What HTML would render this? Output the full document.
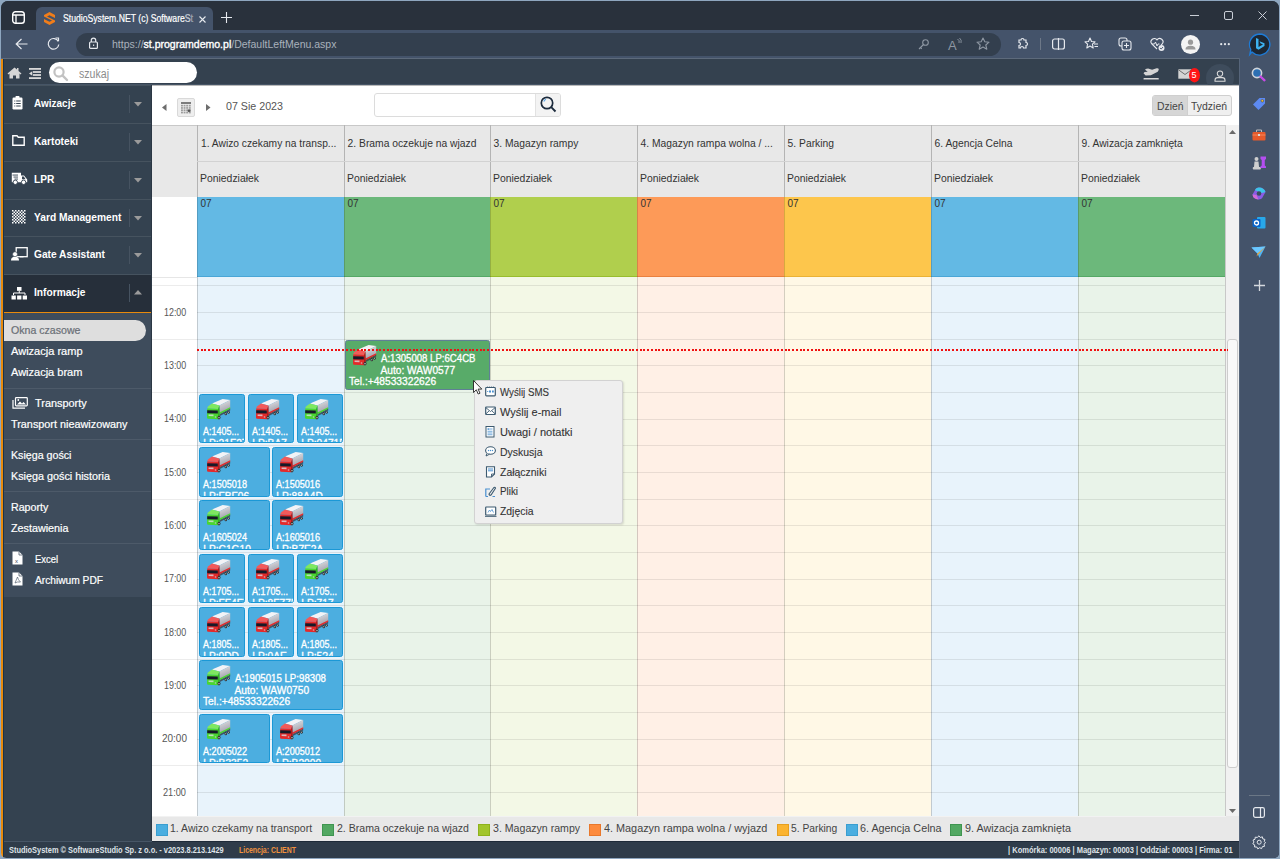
<!DOCTYPE html><html><head><meta charset="utf-8"><title>StudioSystem</title><style>
*{margin:0;padding:0;box-sizing:border-box}
html,body{width:1280px;height:859px;overflow:hidden;background:#8ea6bf;font-family:"Liberation Sans", sans-serif}
.abs{position:absolute}
.t{position:absolute;white-space:nowrap;line-height:1}
svg{position:absolute;overflow:visible}
</style></head><body>
<div class="abs" style="left:1px;top:1px;width:1278px;height:857px;border-radius:7px 7px 5px 5px;overflow:hidden;background:#29313c">
<div class="abs" style="left:0px;top:0px;width:1278px;height:29px;background:#29313c"></div>
<div class="abs" style="left:35px;top:6px;width:177px;height:23px;background:#44536a;border-radius:6px 6px 0 0"></div>
<svg style="left:11px;top:10px;" width="13" height="13" viewBox="0 0 13 13"><rect x="0.7" y="0.7" width="11.6" height="11.6" rx="2.8" fill="none" stroke="#fff" stroke-width="1.4"/><line x1="0.7" y1="4" x2="12.3" y2="4" stroke="#fff" stroke-width="1.3"/><line x1="4" y1="4" x2="4" y2="12.3" stroke="#fff" stroke-width="1.3"/></svg>
<svg style="left:43px;top:11px;" width="11" height="13" viewBox="0 0 11 13"><path d="M5.5 0 L11 3 L11 6 L5.5 3.2 L3 4.6 L11 8.5 L11 10 L5.5 13 L0 10 L0 7 L5.5 9.8 L8 8.4 L0 4.5 L0 3 Z" fill="#f07d1a"/></svg>
<div class="t" style="left:62px;top:13.33px;font-size:10px;transform:scaleX(0.8643);transform-origin:0 0;color:#ffffff;-webkit-text-stroke:0.2px #fff">StudioSystem.NET (c) Software<span style="color:#aeb7c3">S</span><span style="color:#6f7c8d">t</span></div>
<svg style="left:198px;top:15px;" width="7" height="7" viewBox="0 0 7 7"><path d="M0.5 0.5 L6.5 6.5 M6.5 0.5 L0.5 6.5" stroke="#e6e9ee" stroke-width="1.1"/></svg>
<svg style="left:220px;top:11px;" width="11" height="11" viewBox="0 0 11 11"><path d="M5.5 0 V11 M0 5.5 H11" stroke="#e6e9ee" stroke-width="1.1"/></svg>
<svg style="left:1189px;top:14px;" width="9" height="1" viewBox="0 0 9 1"><rect width="9" height="1" fill="#c9ced6"/></svg>
<svg style="left:1223px;top:10px;" width="9" height="9" viewBox="0 0 9 9"><rect x="0.5" y="0.5" width="8" height="8" rx="1.5" fill="none" stroke="#c9ced6" stroke-width="1"/></svg>
<svg style="left:1257px;top:10px;" width="9" height="9" viewBox="0 0 9 9"><path d="M0.5 0.5 L8.5 8.5 M8.5 0.5 L0.5 8.5" stroke="#c9ced6" stroke-width="1"/></svg>
<div class="abs" style="left:0px;top:29px;width:1278px;height:28px;background:#44536a"></div>
<div class="abs" style="left:0px;top:57px;width:1278px;height:1px;background:#44536a"></div>
<div class="abs" style="left:75px;top:32px;width:925px;height:23px;background:#333f4e;border-radius:12px"></div>
<svg style="left:14px;top:37px;" width="13" height="12" viewBox="0 0 13 12"><path d="M12.5 6 H1.5 M6.5 1 L1.2 6 L6.5 11" fill="none" stroke="#e6e9ee" stroke-width="1.2"/></svg>
<svg style="left:46px;top:36px;" width="13" height="13" viewBox="0 0 13 13"><path d="M11.3 4.5 A5.3 5.3 0 1 0 11.8 7.5" fill="none" stroke="#e6e9ee" stroke-width="1.2"/><path d="M8.5 1 L11.5 1 L11.5 4" fill="none" stroke="#e6e9ee" stroke-width="1.2"/></svg>
<svg style="left:88px;top:36px;" width="9" height="12" viewBox="0 0 9 12"><rect x="0.6" y="5" width="7.8" height="6.4" rx="1" fill="none" stroke="#e6e9ee" stroke-width="1.2"/><path d="M2.3 5 V3.3 A2.2 2.2 0 0 1 6.7 3.3 V5" fill="none" stroke="#e6e9ee" stroke-width="1.2"/><rect x="4" y="7.5" width="1.2" height="1.4" fill="#e6e9ee"/></svg>
<div class="t" style="left:110.5px;top:39.38px;font-size:10.3px;transform:scaleX(1.0212);transform-origin:0 0;"><span style="color:#a9b1bc">https://</span><span style="color:#ffffff;-webkit-text-stroke:0.35px #fff">st.programdemo.pl</span><span style="color:#a9b1bc">/DefaultLeftMenu.aspx</span></div>
<svg style="left:917px;top:38px;" width="11" height="11" viewBox="0 0 11 11"><circle cx="7.5" cy="3.5" r="2.8" fill="none" stroke="#8e97a3" stroke-width="1.1"/><path d="M5.5 5.5 L1 10 M2.5 8.5 L3.8 9.8" fill="none" stroke="#8e97a3" stroke-width="1.1"/></svg>
<div class="t" style="left:947px;top:38px;font-size:13px;color:#8e97a3">A</div>
<svg style="left:956px;top:37px;" width="5" height="6" viewBox="0 0 5 6"><path d="M0.5 1 Q3 2.5 2 5 M2.5 0 Q5 2 4 5" fill="none" stroke="#8e97a3" stroke-width="0.9"/></svg>
<svg style="left:975px;top:36px;" width="14" height="13" viewBox="0 0 14 13"><path d="M7 1 L8.8 4.8 L13 5.2 L9.8 8 L10.8 12.2 L7 10 L3.2 12.2 L4.2 8 L1 5.2 L5.2 4.8 Z" fill="none" stroke="#8e97a3" stroke-width="1.1" stroke-linejoin="round"/></svg>
<svg style="left:1015px;top:36px;" width="13" height="13" viewBox="0 0 13 13"><path d="M3 3 H5 A1.5 1.5 0 0 1 8 3 H10 V5.5 A1.5 1.5 0 0 1 10 8.5 V11 H7.5 A1.5 1.5 0 0 0 4.5 11 H3 V8.5 A1.5 1.5 0 0 0 3 5.5 Z" fill="none" stroke="#e6e9ee" stroke-width="1.2"/></svg>
<div class="abs" style="left:1039px;top:37px;width:1px;height:12px;background:#6d7888"></div>
<svg style="left:1051px;top:37px;" width="13" height="12" viewBox="0 0 13 12"><rect x="0.6" y="1" width="11.8" height="10" rx="2" fill="none" stroke="#e6e9ee" stroke-width="1.2"/><line x1="6.5" y1="0" x2="6.5" y2="12" stroke="#e6e9ee" stroke-width="1.2"/></svg>
<svg style="left:1083px;top:36px;" width="15" height="13" viewBox="0 0 15 13"><path d="M6 1 L7.5 4.5 L11 4.8 L8.4 7.2 L9.2 11 L6 9 L2.8 11 L3.6 7.2 L1 4.8 L4.5 4.5 Z" fill="none" stroke="#e6e9ee" stroke-width="1.1" stroke-linejoin="round"/><path d="M10 7 H14 M10.5 9.5 H14" stroke="#e6e9ee" stroke-width="1.1"/></svg>
<svg style="left:1117px;top:36px;" width="14" height="14" viewBox="0 0 14 14"><rect x="1" y="1" width="8" height="8" rx="2" fill="none" stroke="#e6e9ee" stroke-width="1.1"/><rect x="4" y="4" width="9" height="9" rx="2" fill="#44536a" stroke="#e6e9ee" stroke-width="1.1"/><path d="M8.5 6 V11 M6 8.5 H11" stroke="#e6e9ee" stroke-width="1.1"/></svg>
<svg style="left:1149px;top:36px;" width="15" height="14" viewBox="0 0 15 14"><path d="M7 12 L1.8 7 A3 3 0 0 1 7 2.8 A3 3 0 0 1 12.2 7 L11 8.2" fill="none" stroke="#e6e9ee" stroke-width="1.1"/><path d="M2 7 H4.5 L5.5 5 L7 9 L8 7 H9.5" fill="none" stroke="#e6e9ee" stroke-width="1"/><circle cx="11.5" cy="11" r="3" fill="#e6e9ee"/><path d="M10 11 L11.2 12 L13 10" stroke="#44536a" stroke-width="0.9" fill="none"/></svg>
<svg style="left:1180px;top:34px;" width="19" height="19" viewBox="0 0 19 19"><circle cx="9.5" cy="9.5" r="9.5" fill="#f4f4f4"/><circle cx="9.5" cy="7.2" r="2.6" fill="#9a9a9a"/><path d="M4.5 14.5 Q4.5 10.8 9.5 10.8 Q14.5 10.8 14.5 14.5 Z" fill="#9a9a9a"/></svg>
<svg style="left:1219px;top:42px;" width="10" height="3" viewBox="0 0 10 3"><circle cx="1.2" cy="1.2" r="1.1" fill="#e6e9ee"/><circle cx="5" cy="1.2" r="1.1" fill="#e6e9ee"/><circle cx="8.8" cy="1.2" r="1.1" fill="#e6e9ee"/></svg>
<svg style="left:1247px;top:32px;" width="23" height="23" viewBox="0 0 23 23"><path d="M11.5 1 A10.5 10.5 0 1 1 4 19 L1.8 21.5 L2.8 16.5 A10.5 10.5 0 0 1 11.5 1 Z" fill="#1d2733" stroke="#1e7bd6" stroke-width="1.3"/><path d="M8 5 L10.5 6 V14 L15 11.5 L12.5 10.3 L11.5 8.3 L16.5 10.2 V13 L10.5 16.8 L8 15.3 Z" fill="#3db2f0"/></svg>
<div class="abs" style="left:0px;top:58px;width:1238px;height:799px;background:#ffffff"></div>
<div class="abs" style="left:1238px;top:58px;width:40px;height:799px;background:#44536a"></div>
<div class="abs" style="left:0px;top:57px;width:1239px;height:1px;background:#5d6a7b"></div>
<div class="abs" style="left:1238px;top:57px;width:1px;height:800px;background:#56657a"></div>
<div class="abs" style="left:0px;top:58px;width:1238px;height:26px;background:#34414f"></div>
<div class="abs" style="left:0px;top:83px;width:1238px;height:1px;background:#465566"></div>
<div class="abs" style="left:0px;top:84px;width:151px;height:757px;background:#344250"></div>
<div class="abs" style="left:0px;top:58px;width:2px;height:799px;background:#e88a0c"></div>
<div class="abs" style="left:2px;top:58px;width:1px;height:799px;background:#1d3347"></div>
<svg style="left:6px;top:66px;" width="15" height="12" viewBox="0 0 15 12"><path d="M7.5 0.5 L0.5 6.5 L1.5 7.5 L2.5 6.6 V11.5 H6 V8.5 H9 V11.5 H12.5 V6.6 L13.5 7.5 L14.5 6.5 L11.5 3.9 V1 H10 V2.6 Z" fill="#d6d6d6"/></svg>
<svg style="left:28px;top:67px;" width="12" height="11" viewBox="0 0 12 11"><rect x="0" y="0" width="12" height="1.8" fill="#d8d8d8"/><rect x="4" y="3.1" width="8" height="1.8" fill="#d8d8d8"/><rect x="4" y="6.1" width="8" height="1.8" fill="#d8d8d8"/><rect x="0" y="9.2" width="12" height="1.8" fill="#d8d8d8"/><path d="M0 5.5 L3.3 3.3 V7.7 Z" fill="#d8d8d8"/></svg>
<div class="abs" style="left:48px;top:61px;width:148px;height:21px;background:#ffffff;border-radius:11px"></div>
<svg style="left:52px;top:65px;" width="15" height="15" viewBox="0 0 15 15"><circle cx="6" cy="6" r="4.6" fill="none" stroke="#c2c2c2" stroke-width="2.2"/><path d="M9.4 9.4 L14 14" stroke="#c2c2c2" stroke-width="2.4" stroke-linecap="round"/></svg>
<div class="t" style="left:78px;top:67.04px;font-size:12px;transform:scaleX(0.8820);transform-origin:0 0;color:#8c8c8c">szukaj</div>
<svg style="left:1142px;top:66px;" width="17" height="14" viewBox="0 0 17 14"><path d="M2.35 2.1 L5.1 1.4 L9.1 2.8 L13.7 1.2 Q15.6 1 15.8 2.35 Q15.6 3.9 14.7 4.7 L7.9 8.2 L2.6 8.6 L0.5 6.3 L1.65 5.1 L4.7 4.7 L2.35 3 Z" fill="#d4d4d4"/><rect x="0.5" y="11" width="15.3" height="1.5" rx="0.6" fill="#d8d8d8"/></svg>
<svg style="left:1177px;top:68px;" width="14" height="10" viewBox="0 0 14 10"><rect x="0.3" y="0.3" width="13.4" height="9.4" fill="#d4d4d4"/><path d="M0.5 0.8 L7 5.5 L13.5 0.8" fill="none" stroke="#555" stroke-width="0.8"/></svg>
<svg style="left:1188px;top:67px;" width="11" height="15" viewBox="0 0 11 15"><ellipse cx="5.5" cy="7.2" rx="5.5" ry="7.2" fill="#ff1414"/></svg>
<div class="t" style="left:1190.5px;top:70px;font-size:9px;color:#fff">5</div>
<svg style="left:1205px;top:63px;" width="28" height="21" viewBox="0 0 28 21"><circle cx="14" cy="14" r="14" fill="#3e4c5c"/></svg>
<svg style="left:1213px;top:69px;" width="12" height="12" viewBox="0 0 12 12"><circle cx="6" cy="3.6" r="2.7" fill="none" stroke="#dcdcdc" stroke-width="1.05"/><path d="M1 11.3 V10.2 Q1 7.6 3.7 7.6 H8.3 Q11 7.6 11 10.2 V11.3 Z" fill="none" stroke="#dcdcdc" stroke-width="1.05"/></svg>
<svg style="left:1250px;top:66px;" width="15" height="15" viewBox="0 0 15 15"><circle cx="6" cy="6" r="4.6" fill="#2c6fb3" stroke="#cfd4da" stroke-width="1.6"/><path d="M9.5 9.5 L13.5 13.3" stroke="#c74be6" stroke-width="2.3" stroke-linecap="round"/></svg>
<svg style="left:1251px;top:96px;" width="14" height="13" viewBox="0 0 14 13"><path d="M1 7.5 L7.5 1 H13 V6.5 L6.5 13 Z" fill="#5d8af2"/><circle cx="10.3" cy="3.8" r="1.3" fill="#f2c12e" stroke="#3a3a3a" stroke-width="0.5"/></svg>
<svg style="left:1251px;top:128px;" width="14" height="12" viewBox="0 0 14 12"><path d="M4.5 3 V1 H9.5 V3" fill="none" stroke="#bbb" stroke-width="1"/><rect x="0.5" y="3" width="13" height="8.5" rx="1" fill="#e55a2b"/><rect x="0.5" y="5.5" width="13" height="1" fill="#f3885d"/><rect x="6" y="5" width="2" height="2" fill="#ddd"/></svg>
<svg style="left:1251px;top:155px;" width="15" height="14" viewBox="0 0 15 14"><circle cx="4.5" cy="3" r="2" fill="#cfcfcf"/><path d="M2.5 5.5 H6.5 L7 11 H2 Z" fill="#cfcfcf"/><rect x="0.8" y="11" width="8" height="2.5" rx="0.8" fill="#cfcfcf"/><path d="M8.5 0.5 H14 V3 L12.8 4 V9.5 L14 10.5 V12 H8.5 V10.5 L9.7 9.5 V4 L8.5 3 Z" fill="#b44ef0"/></svg>
<svg style="left:1251px;top:186px;" width="14" height="13" viewBox="0 0 14 13"><path d="M7 0.5 Q12 0.5 13.5 5 L11 9.5 Q10 12.5 6.5 12.5 Q1 12 0.5 7.5 L3 3.3 Q4 0.5 7 0.5 Z" fill="#8a5ce6"/><path d="M3 3.3 Q4 0.5 7 0.5 Q12 0.5 13.5 5 L10 6 Z" fill="#3cc5e8"/><path d="M0.5 7.5 Q1 12 6.5 12.5 L4.5 8 Z" fill="#d46ad8"/><circle cx="7" cy="6.5" r="2.3" fill="#3d4b5e"/></svg>
<svg style="left:1251px;top:215px;" width="14" height="14" viewBox="0 0 14 14"><rect x="5" y="1" width="8.5" height="11.5" rx="1" fill="#28a8ea"/><rect x="0.5" y="3" width="8" height="8" rx="1" fill="#0a64c8"/><circle cx="4.5" cy="7" r="2" fill="none" stroke="#fff" stroke-width="1.3"/></svg>
<svg style="left:1250px;top:245px;" width="15" height="13" viewBox="0 0 15 13"><path d="M0.5 1.5 L14.5 0.5 L8.5 12 L6.5 7.5 Z" fill="#4fb3f5"/><path d="M0.5 1.5 L14.5 0.5 L6.5 7.5 Z" fill="#6bc7ff"/><path d="M6.5 7.5 L14.5 0.5 L5.5 10.5 Z" fill="#f2a531"/></svg>
<svg style="left:1253px;top:279px;" width="11" height="11" viewBox="0 0 11 11"><path d="M5.5 0 V11 M0 5.5 H11" stroke="#d4d8de" stroke-width="1.3"/></svg>
<div class="abs" style="left:1248px;top:794px;width:21px;height:1px;background:#6b7786"></div>
<svg style="left:1252px;top:806px;" width="12" height="11" viewBox="0 0 12 11"><rect x="0.6" y="0.6" width="10.8" height="9.8" rx="1.8" fill="none" stroke="#e6e9ee" stroke-width="1.2"/><line x1="7.5" y1="0.6" x2="7.5" y2="10.4" stroke="#e6e9ee" stroke-width="1.2"/></svg>
<svg style="left:1251px;top:834px;" width="14" height="14" viewBox="0 0 14 14"><path d="M7 0.8 L8.3 2.5 L10.4 1.8 L10.8 3.9 L12.9 4.4 L12.3 6.5 L13.6 7.8 L12 9.2 L12.5 11.3 L10.4 11.6 L9.6 13.6 L7.6 12.7 L5.8 13.9 L4.8 12 L2.6 12 L2.7 9.9 L0.8 8.8 L2 7 L1 5.1 L3 4.3 L3.2 2.2 L5.3 2.4 Z" fill="none" stroke="#e6e9ee" stroke-width="1"/><circle cx="7.2" cy="7.2" r="2" fill="none" stroke="#e6e9ee" stroke-width="1"/></svg>
<div class="abs" style="left:3px;top:84px;width:148px;height:1px;background:#46535f"></div>
<div class="t" style="left:33px;top:98.17px;font-size:10.2px;font-weight:bold;transform:scaleX(0.9790);transform-origin:0 0;color:#ffffff">Awizacje</div>
<div class="abs" style="left:128px;top:94px;width:1px;height:18px;background:#465361"></div>
<svg style="left:133px;top:101px;" width="8" height="5" viewBox="0 0 8 5"><path d="M0 0 L8 0 L4 4.5 Z" fill="#9b9b9b"/></svg>
<div class="abs" style="left:3px;top:122px;width:148px;height:1px;background:#46535f"></div>
<div class="t" style="left:33px;top:136.17px;font-size:10.2px;font-weight:bold;color:#ffffff">Kartoteki</div>
<div class="abs" style="left:128px;top:132px;width:1px;height:18px;background:#465361"></div>
<svg style="left:133px;top:139px;" width="8" height="5" viewBox="0 0 8 5"><path d="M0 0 L8 0 L4 4.5 Z" fill="#9b9b9b"/></svg>
<div class="abs" style="left:3px;top:160px;width:148px;height:1px;background:#46535f"></div>
<div class="t" style="left:33px;top:174.17px;font-size:10.2px;font-weight:bold;color:#ffffff">LPR</div>
<div class="abs" style="left:128px;top:170px;width:1px;height:18px;background:#465361"></div>
<svg style="left:133px;top:177px;" width="8" height="5" viewBox="0 0 8 5"><path d="M0 0 L8 0 L4 4.5 Z" fill="#9b9b9b"/></svg>
<div class="abs" style="left:3px;top:198px;width:148px;height:1px;background:#46535f"></div>
<div class="t" style="left:33px;top:212.17px;font-size:10.2px;font-weight:bold;transform:scaleX(1.0024);transform-origin:0 0;color:#ffffff">Yard Management</div>
<div class="abs" style="left:128px;top:208px;width:1px;height:18px;background:#465361"></div>
<svg style="left:133px;top:215px;" width="8" height="5" viewBox="0 0 8 5"><path d="M0 0 L8 0 L4 4.5 Z" fill="#9b9b9b"/></svg>
<div class="abs" style="left:3px;top:235px;width:148px;height:1px;background:#46535f"></div>
<div class="t" style="left:33px;top:249.17px;font-size:10.2px;font-weight:bold;color:#ffffff">Gate Assistant</div>
<div class="abs" style="left:128px;top:245px;width:1px;height:18px;background:#465361"></div>
<svg style="left:133px;top:252px;" width="8" height="5" viewBox="0 0 8 5"><path d="M0 0 L8 0 L4 4.5 Z" fill="#9b9b9b"/></svg>
<div class="abs" style="left:3px;top:274px;width:148px;height:37px;background:#262f3a"></div>
<div class="abs" style="left:3px;top:273px;width:148px;height:1px;background:#46535f"></div>
<div class="t" style="left:33px;top:287.17px;font-size:10.2px;font-weight:bold;color:#ffffff">Informacje</div>
<div class="abs" style="left:128px;top:283px;width:1px;height:18px;background:#465361"></div>
<svg style="left:133px;top:289px;" width="8" height="5" viewBox="0 0 8 5"><path d="M0 4.5 L4 0 L8 4.5 Z" fill="#9b9b9b"/></svg>
<svg style="left:11px;top:95px;" width="11" height="14" viewBox="0 0 11 14"><rect x="0.5" y="1.5" width="10" height="12" rx="1.2" fill="#fff"/><rect x="3.5" y="0" width="4" height="2.5" rx="0.8" fill="#fff"/><g fill="#344250"><rect x="2.3" y="4.5" width="1" height="1"/><rect x="4.2" y="4.5" width="4.5" height="1"/><rect x="2.3" y="7" width="1" height="1"/><rect x="4.2" y="7" width="4.5" height="1"/><rect x="2.3" y="9.5" width="1" height="1"/><rect x="4.2" y="9.5" width="4.5" height="1"/></g></svg>
<svg style="left:11px;top:134px;" width="13" height="11" viewBox="0 0 13 11"><path d="M0.8 0.8 H5 L6.3 2.3 H12.2 V10.2 H0.8 Z" fill="none" stroke="#fff" stroke-width="1.4"/></svg>
<svg style="left:10px;top:171px;" width="17" height="13" viewBox="0 0 17 13"><path d="M0.8 0.8 H10 V3.5 H13 L16.2 7.5 V10.2 H0.8 Z" fill="#fff"/><circle cx="4.3" cy="10.3" r="2.2" fill="#fff" stroke="#344250" stroke-width="0.9"/><circle cx="12.6" cy="10.3" r="2.2" fill="#fff" stroke="#344250" stroke-width="0.9"/><g fill="#344250"><rect x="1.5" y="2.6" width="5.5" height="0.9"/><rect x="2.5" y="4.6" width="4.5" height="0.9"/><rect x="3.5" y="6.6" width="3.5" height="0.9"/><path d="M11 4.6 H12.8 L14.6 7.2 H11 Z"/></g></svg>
<svg style="left:11px;top:209px;" width="14" height="14" viewBox="0 0 14 14"><g fill="#fff"><rect x="0.0" y="0.0" width="1.5" height="1.5"/><rect x="0.0" y="3.0" width="1.5" height="1.5"/><rect x="0.0" y="6.0" width="1.5" height="1.5"/><rect x="0.0" y="9.0" width="1.5" height="1.5"/><rect x="0.0" y="12.0" width="1.5" height="1.5"/><rect x="1.5" y="1.5" width="1.5" height="1.5"/><rect x="1.5" y="4.5" width="1.5" height="1.5"/><rect x="1.5" y="7.5" width="1.5" height="1.5"/><rect x="1.5" y="10.5" width="1.5" height="1.5"/><rect x="3.0" y="0.0" width="1.5" height="1.5"/><rect x="3.0" y="3.0" width="1.5" height="1.5"/><rect x="3.0" y="6.0" width="1.5" height="1.5"/><rect x="3.0" y="9.0" width="1.5" height="1.5"/><rect x="3.0" y="12.0" width="1.5" height="1.5"/><rect x="4.5" y="1.5" width="1.5" height="1.5"/><rect x="4.5" y="4.5" width="1.5" height="1.5"/><rect x="4.5" y="7.5" width="1.5" height="1.5"/><rect x="4.5" y="10.5" width="1.5" height="1.5"/><rect x="6.0" y="0.0" width="1.5" height="1.5"/><rect x="6.0" y="3.0" width="1.5" height="1.5"/><rect x="6.0" y="6.0" width="1.5" height="1.5"/><rect x="6.0" y="9.0" width="1.5" height="1.5"/><rect x="6.0" y="12.0" width="1.5" height="1.5"/><rect x="7.5" y="1.5" width="1.5" height="1.5"/><rect x="7.5" y="4.5" width="1.5" height="1.5"/><rect x="7.5" y="7.5" width="1.5" height="1.5"/><rect x="7.5" y="10.5" width="1.5" height="1.5"/><rect x="9.0" y="0.0" width="1.5" height="1.5"/><rect x="9.0" y="3.0" width="1.5" height="1.5"/><rect x="9.0" y="6.0" width="1.5" height="1.5"/><rect x="9.0" y="9.0" width="1.5" height="1.5"/><rect x="9.0" y="12.0" width="1.5" height="1.5"/><rect x="10.5" y="1.5" width="1.5" height="1.5"/><rect x="10.5" y="4.5" width="1.5" height="1.5"/><rect x="10.5" y="7.5" width="1.5" height="1.5"/><rect x="10.5" y="10.5" width="1.5" height="1.5"/><rect x="12.0" y="0.0" width="1.5" height="1.5"/><rect x="12.0" y="3.0" width="1.5" height="1.5"/><rect x="12.0" y="6.0" width="1.5" height="1.5"/><rect x="12.0" y="9.0" width="1.5" height="1.5"/><rect x="12.0" y="12.0" width="1.5" height="1.5"/></g></svg>
<svg style="left:10px;top:246px;" width="17" height="14" viewBox="0 0 17 14"><rect x="5.2" y="0.7" width="11" height="9" fill="none" stroke="#fff" stroke-width="1.3"/><circle cx="4" cy="7.2" r="2.5" fill="#fff" stroke="#344250" stroke-width="0.7"/><path d="M0 13.5 Q0 9.8 4 9.8 Q8 9.8 8 13.5 Z" fill="#fff"/><path d="M9 9.7 H12.5" stroke="#fff" stroke-width="1.3"/></svg>
<svg style="left:10px;top:286px;" width="17" height="13" viewBox="0 0 17 13"><rect x="6" y="0" width="4.5" height="3.8" fill="#fff"/><path d="M8.25 3.8 V6 M2.5 8 V6 H14 V8" fill="none" stroke="#fff" stroke-width="1"/><rect x="0.5" y="8.5" width="4.3" height="4" fill="#fff"/><rect x="6.1" y="8.5" width="4.3" height="4" fill="#fff"/><rect x="11.7" y="8.5" width="4.3" height="4" fill="#fff"/></svg>
<div class="abs" style="left:3px;top:311px;width:148px;height:1px;background:#e88a0c"></div>
<div class="abs" style="left:3px;top:312px;width:147px;height:284px;background:#3e4c5c"></div>
<div class="abs" style="left:150px;top:84px;width:1px;height:757px;background:#2b3744"></div>
<div class="abs" style="left:3px;top:319px;width:142px;height:21px;background:#dedede;border-radius:0 10.5px 10.5px 0"></div>
<div class="t" style="left:10px;top:324.16px;font-size:10.8px;transform:scaleX(0.9812);transform-origin:0 0;color:#6a6f76;-webkit-text-stroke:0.2px #6a6f76">Okna czasowe</div>
<div class="t" style="left:10px;top:345.16px;font-size:10.8px;transform:scaleX(1.0225);transform-origin:0 0;color:#ffffff;-webkit-text-stroke:0.2px #ffffff">Awizacja ramp</div>
<div class="t" style="left:10px;top:366.16px;font-size:10.8px;transform:scaleX(1.0197);transform-origin:0 0;color:#ffffff;-webkit-text-stroke:0.2px #ffffff">Awizacja bram</div>
<div class="abs" style="left:3px;top:387px;width:147px;height:1px;background:#4d5a69"></div>
<svg style="left:11px;top:396px;" width="16" height="12" viewBox="0 0 16 12"><rect x="3.5" y="0.6" width="11.8" height="8.3" rx="0.8" fill="none" stroke="#fff" stroke-width="1.2"/><path d="M1 3 V11.2 H13" fill="none" stroke="#fff" stroke-width="1.2"/><path d="M5 7.5 L8 4.5 L10 6.5 L11.5 5 L14 7.5 Z" fill="#fff"/><circle cx="6.3" cy="3" r="0.9" fill="#fff"/></svg>
<div class="t" style="left:34px;top:397.36px;font-size:10.8px;transform:scaleX(1.0095);transform-origin:0 0;color:#ffffff;-webkit-text-stroke:0.2px #ffffff">Transporty</div>
<div class="t" style="left:9.5px;top:418.06px;font-size:10.8px;transform:scaleX(1.0039);transform-origin:0 0;color:#ffffff;-webkit-text-stroke:0.2px #ffffff">Transport nieawizowany</div>
<div class="abs" style="left:3px;top:438px;width:147px;height:1px;background:#4d5a69"></div>
<div class="t" style="left:9.5px;top:448.76px;font-size:10.8px;transform:scaleX(0.9880);transform-origin:0 0;color:#ffffff;-webkit-text-stroke:0.2px #ffffff">Księga gości</div>
<div class="t" style="left:9.5px;top:469.76px;font-size:10.8px;transform:scaleX(0.9995);transform-origin:0 0;color:#ffffff;-webkit-text-stroke:0.2px #ffffff">Księga gości historia</div>
<div class="abs" style="left:3px;top:490px;width:147px;height:1px;background:#4d5a69"></div>
<div class="t" style="left:9.5px;top:501.46px;font-size:10.8px;transform:scaleX(0.9864);transform-origin:0 0;color:#ffffff;-webkit-text-stroke:0.2px #ffffff">Raporty</div>
<div class="t" style="left:9.5px;top:521.76px;font-size:10.8px;transform:scaleX(0.9978);transform-origin:0 0;color:#ffffff;-webkit-text-stroke:0.2px #ffffff">Zestawienia</div>
<div class="abs" style="left:3px;top:542px;width:147px;height:1px;background:#4d5a69"></div>
<svg style="left:11px;top:550px;" width="11" height="14" viewBox="0 0 11 14"><path d="M0.5 0.5 H7 L10.5 4 V13.5 H0.5 Z" fill="#fff"/><path d="M7 0.5 V4 H10.5" fill="none" stroke="#3e4c5c" stroke-width="0.7"/><text x="3" y="11.5" font-size="6" font-family="Liberation Sans" fill="#3e4c5c">x</text></svg>
<div class="t" style="left:34px;top:553.16px;font-size:10.8px;transform:scaleX(0.8785);transform-origin:0 0;color:#ffffff;-webkit-text-stroke:0.2px #ffffff">Excel</div>
<svg style="left:11px;top:571px;" width="11" height="14" viewBox="0 0 11 14"><path d="M0.5 0.5 H7 L10.5 4 V13.5 H0.5 Z" fill="#fff"/><path d="M7 0.5 V4 H10.5" fill="none" stroke="#3e4c5c" stroke-width="0.7"/><path d="M3 11 Q5 6 5.5 5 Q6 8 8.5 10 Q5 9.5 3 11 Z" fill="none" stroke="#3e4c5c" stroke-width="0.6"/></svg>
<div class="t" style="left:34px;top:573.66px;font-size:10.8px;transform:scaleX(0.9443);transform-origin:0 0;color:#ffffff;-webkit-text-stroke:0.2px #ffffff">Archiwum PDF</div>
<div class="abs" style="left:3px;top:840px;width:148px;height:1px;background:#475666"></div>
<div class="abs" style="left:151px;top:840px;width:1087px;height:1px;background:#1e2a38"></div>
<div class="abs" style="left:3px;top:841px;width:1235px;height:16px;background:#2f3c4a"></div>
<div class="t" style="left:8px;top:845.24px;font-size:8.7px;font-weight:bold;transform:scaleX(0.8548);transform-origin:0 0;color:#dfe3e8">StudioSystem © SoftwareStudio Sp. z o.o. - v2023.8.213.1429</div>
<div class="t" style="left:238px;top:845.24px;font-size:8.7px;font-weight:bold;transform:scaleX(0.7967);transform-origin:0 0;color:#f0923e">Licencja: CLIENT</div>
<div class="t" style="left:1007px;top:845.24px;font-size:8.7px;font-weight:bold;transform:scaleX(0.8663);transform-origin:0 0;color:#dfe3e8">| Komórka: 00006 | Magazyn: 00003 | Oddział: 00003 | Firma: 01</div>
<div class="abs" style="left:151px;top:84px;width:1087px;height:756px;background:#ffffff"></div>
<div class="abs" style="left:151px;top:84px;width:1087px;height:1px;background:#b9b9b9"></div>
<svg style="left:161px;top:103px;" width="5" height="7" viewBox="0 0 5 7"><path d="M4.5 0 V7 L0 3.5 Z" fill="#6d6d6d"/></svg>
<div class="abs" style="left:176px;top:97px;width:18px;height:19px;background:#eeeeee;border:1px solid #d9d9d9;border-radius:2px"></div>
<svg style="left:180px;top:101px;" width="10" height="12" viewBox="0 0 10 12"><rect x="0" y="0" width="10" height="2" fill="#7b7b7b"/><rect x="0.0" y="2.8" width="1.9" height="1.7" fill="#9c9c9c"/><rect x="0.0" y="5.1" width="1.9" height="1.7" fill="#9c9c9c"/><rect x="0.0" y="7.3999999999999995" width="1.9" height="1.7" fill="#9c9c9c"/><rect x="0.0" y="9.7" width="1.9" height="1.7" fill="#9c9c9c"/><rect x="2.6" y="2.8" width="1.9" height="1.7" fill="#9c9c9c"/><rect x="2.6" y="5.1" width="1.9" height="1.7" fill="#9c9c9c"/><rect x="2.6" y="7.3999999999999995" width="1.9" height="1.7" fill="#9c9c9c"/><rect x="2.6" y="9.7" width="1.9" height="1.7" fill="#9c9c9c"/><rect x="5.2" y="2.8" width="1.9" height="1.7" fill="#9c9c9c"/><rect x="5.2" y="5.1" width="1.9" height="1.7" fill="#9c9c9c"/><rect x="5.2" y="7.3999999999999995" width="1.9" height="1.7" fill="#9c9c9c"/><rect x="5.2" y="9.7" width="1.9" height="1.7" fill="#9c9c9c"/><rect x="7.800000000000001" y="2.8" width="1.9" height="1.7" fill="#9c9c9c"/><rect x="7.800000000000001" y="5.1" width="1.9" height="1.7" fill="#9c9c9c"/><rect x="7.800000000000001" y="7.3999999999999995" width="1.9" height="1.7" fill="#9c9c9c"/><rect x="7.800000000000001" y="9.7" width="1.9" height="1.7" fill="#9c9c9c"/><rect x="6.8" y="7.5" width="2.6" height="2.4" fill="#555"/></svg>
<svg style="left:205px;top:103px;" width="5" height="7" viewBox="0 0 5 7"><path d="M0 0 V7 L4.5 3.5 Z" fill="#6d6d6d"/></svg>
<div class="t" style="left:224.6px;top:100.29px;font-size:11px;transform:scaleX(0.9708);transform-origin:0 0;color:#555555">07 Sie 2023</div>
<div class="abs" style="left:373px;top:92px;width:187px;height:24px;background:#fff;border:1px solid #dcdcdc;border-radius:3px"></div>
<div class="abs" style="left:534px;top:93px;width:25px;height:22px;background:#f3f3f3;border-left:1px solid #e2e2e2;border-radius:0 2px 2px 0"></div>
<svg style="left:539px;top:95px;" width="17" height="17" viewBox="0 0 17 17"><circle cx="7" cy="7" r="5.7" fill="none" stroke="#1c2b3d" stroke-width="1.7"/><path d="M3.8 5.5 A3.5 3.5 0 0 1 6 3.3" fill="none" stroke="#5aa5e6" stroke-width="1.2"/><path d="M11.2 11.2 L15.5 15.5" stroke="#1c2b3d" stroke-width="1.9"/></svg>
<div class="abs" style="left:1151px;top:94px;width:80px;height:21px;background:#efefef;border:1px solid #cfcfcf;border-radius:3px"></div>
<div class="abs" style="left:1152px;top:95px;width:35px;height:19px;background:#d6d6d6;border-right:1px solid #cfcfcf;border-radius:2px 0 0 2px"></div>
<div class="t" style="left:1155.5px;top:99.71px;font-size:10.5px;transform:scaleX(0.9872);transform-origin:0 0;color:#444">Dzień</div>
<div class="t" style="left:1190px;top:99.71px;font-size:10.5px;transform:scaleX(0.9949);transform-origin:0 0;color:#444">Tydzień</div>
<div class="abs" style="left:151px;top:124px;width:1087px;height:72px;background:#e8e8e8"></div>
<div class="abs" style="left:151px;top:124px;width:1087px;height:1px;background:#c8c8c8"></div>
<div class="abs" style="left:196px;top:124px;width:1px;height:72px;background:#b4b4b4"></div>
<div class="abs" style="left:196px;top:160px;width:147px;height:1px;background:#d2d2d2"></div>
<div class="t" style="left:199.6px;top:138.08px;font-size:10.3px;transform:scaleX(0.9952);transform-origin:0 0;color:#333">1. Awizo czekamy na transp...</div>
<div class="t" style="left:199px;top:172.68px;font-size:10.3px;transform:scaleX(1.0102);transform-origin:0 0;color:#333">Poniedziałek</div>
<div class="abs" style="left:196px;top:196px;width:147px;height:80px;background:#63b9e4"></div>
<div class="abs" style="left:196px;top:275px;width:147px;height:1px;background:#4aa6d6"></div>
<div class="abs" style="left:196px;top:196px;width:1px;height:80px;background:rgba(0,0,0,0.15)"></div>
<div class="t" style="left:199.5px;top:198.13px;font-size:10px;color:#333">07</div>
<div class="abs" style="left:343px;top:124px;width:1px;height:72px;background:#b4b4b4"></div>
<div class="abs" style="left:343px;top:160px;width:146px;height:1px;background:#d2d2d2"></div>
<div class="t" style="left:346.6px;top:138.08px;font-size:10.3px;color:#333">2. Brama oczekuje na wjazd</div>
<div class="t" style="left:346px;top:172.68px;font-size:10.3px;transform:scaleX(1.0102);transform-origin:0 0;color:#333">Poniedziałek</div>
<div class="abs" style="left:343px;top:196px;width:146px;height:80px;background:#6cb87b"></div>
<div class="abs" style="left:343px;top:275px;width:146px;height:1px;background:#55a866"></div>
<div class="abs" style="left:343px;top:196px;width:1px;height:80px;background:rgba(0,0,0,0.15)"></div>
<div class="t" style="left:346.5px;top:198.13px;font-size:10px;color:#333">07</div>
<div class="abs" style="left:489px;top:124px;width:1px;height:72px;background:#b4b4b4"></div>
<div class="abs" style="left:489px;top:160px;width:147px;height:1px;background:#d2d2d2"></div>
<div class="t" style="left:492.6px;top:138.08px;font-size:10.3px;color:#333">3. Magazyn rampy</div>
<div class="t" style="left:492px;top:172.68px;font-size:10.3px;transform:scaleX(1.0102);transform-origin:0 0;color:#333">Poniedziałek</div>
<div class="abs" style="left:489px;top:196px;width:147px;height:80px;background:#b0cf4d"></div>
<div class="abs" style="left:489px;top:275px;width:147px;height:1px;background:#98bd2e"></div>
<div class="abs" style="left:489px;top:196px;width:1px;height:80px;background:rgba(0,0,0,0.15)"></div>
<div class="t" style="left:492.5px;top:198.13px;font-size:10px;color:#333">07</div>
<div class="abs" style="left:636px;top:124px;width:1px;height:72px;background:#b4b4b4"></div>
<div class="abs" style="left:636px;top:160px;width:147px;height:1px;background:#d2d2d2"></div>
<div class="t" style="left:639.6px;top:138.08px;font-size:10.3px;color:#333">4. Magazyn rampa wolna / ...</div>
<div class="t" style="left:639px;top:172.68px;font-size:10.3px;transform:scaleX(1.0102);transform-origin:0 0;color:#333">Poniedziałek</div>
<div class="abs" style="left:636px;top:196px;width:147px;height:80px;background:#fd9a58"></div>
<div class="abs" style="left:636px;top:275px;width:147px;height:1px;background:#e98140"></div>
<div class="abs" style="left:636px;top:196px;width:1px;height:80px;background:rgba(0,0,0,0.15)"></div>
<div class="t" style="left:639.5px;top:198.13px;font-size:10px;color:#333">07</div>
<div class="abs" style="left:783px;top:124px;width:1px;height:72px;background:#b4b4b4"></div>
<div class="abs" style="left:783px;top:160px;width:147px;height:1px;background:#d2d2d2"></div>
<div class="t" style="left:786.6px;top:138.08px;font-size:10.3px;color:#333">5. Parking</div>
<div class="t" style="left:786px;top:172.68px;font-size:10.3px;transform:scaleX(1.0102);transform-origin:0 0;color:#333">Poniedziałek</div>
<div class="abs" style="left:783px;top:196px;width:147px;height:80px;background:#fdc64c"></div>
<div class="abs" style="left:783px;top:275px;width:147px;height:1px;background:#eab236"></div>
<div class="abs" style="left:783px;top:196px;width:1px;height:80px;background:rgba(0,0,0,0.15)"></div>
<div class="t" style="left:786.5px;top:198.13px;font-size:10px;color:#333">07</div>
<div class="abs" style="left:930px;top:124px;width:1px;height:72px;background:#b4b4b4"></div>
<div class="abs" style="left:930px;top:160px;width:147px;height:1px;background:#d2d2d2"></div>
<div class="t" style="left:933.6px;top:138.08px;font-size:10.3px;color:#333">6. Agencja Celna</div>
<div class="t" style="left:933px;top:172.68px;font-size:10.3px;transform:scaleX(1.0102);transform-origin:0 0;color:#333">Poniedziałek</div>
<div class="abs" style="left:930px;top:196px;width:147px;height:80px;background:#63b9e4"></div>
<div class="abs" style="left:930px;top:275px;width:147px;height:1px;background:#4aa6d6"></div>
<div class="abs" style="left:930px;top:196px;width:1px;height:80px;background:rgba(0,0,0,0.15)"></div>
<div class="t" style="left:933.5px;top:198.13px;font-size:10px;color:#333">07</div>
<div class="abs" style="left:1077px;top:124px;width:1px;height:72px;background:#b4b4b4"></div>
<div class="abs" style="left:1077px;top:160px;width:147px;height:1px;background:#d2d2d2"></div>
<div class="t" style="left:1080.6px;top:138.08px;font-size:10.3px;color:#333">9. Awizacja zamknięta</div>
<div class="t" style="left:1080px;top:172.68px;font-size:10.3px;transform:scaleX(1.0102);transform-origin:0 0;color:#333">Poniedziałek</div>
<div class="abs" style="left:1077px;top:196px;width:147px;height:80px;background:#6cb87b"></div>
<div class="abs" style="left:1077px;top:275px;width:147px;height:1px;background:#55a866"></div>
<div class="abs" style="left:1077px;top:196px;width:1px;height:80px;background:rgba(0,0,0,0.15)"></div>
<div class="t" style="left:1080.5px;top:198.13px;font-size:10px;color:#333">07</div>
<div class="abs" style="left:1224px;top:124px;width:1px;height:692px;background:#c8c8c8"></div>
<div class="abs" style="left:1225px;top:124px;width:13px;height:692px;background:#f1f1f1"></div>
<svg style="left:1228px;top:129px;" width="7" height="4" viewBox="0 0 7 4"><path d="M0 4 L3.5 0 L7 4 Z" fill="#6a6a6a"/></svg>
<svg style="left:1228px;top:808px;" width="7" height="4" viewBox="0 0 7 4"><path d="M0 0 L7 0 L3.5 4 Z" fill="#6a6a6a"/></svg>
<div class="abs" style="left:1226px;top:338px;width:11px;height:429px;background:#f9f9f9;border:1px solid #cdcdcd;border-radius:3px"></div>
<div class="abs" style="left:151px;top:276px;width:45px;height:539px;background:#ffffff"></div>
<div class="abs" style="left:196px;top:276px;width:147px;height:539px;background:#e8f3fb"></div>
<div class="abs" style="left:196px;top:276px;width:1px;height:539px;background:rgba(0,0,0,0.17)"></div>
<div class="abs" style="left:343px;top:276px;width:146px;height:539px;background:#e9f3e9"></div>
<div class="abs" style="left:343px;top:276px;width:1px;height:539px;background:rgba(0,0,0,0.17)"></div>
<div class="abs" style="left:489px;top:276px;width:147px;height:539px;background:#f3f8e6"></div>
<div class="abs" style="left:489px;top:276px;width:1px;height:539px;background:rgba(0,0,0,0.17)"></div>
<div class="abs" style="left:636px;top:276px;width:147px;height:539px;background:#fff0e6"></div>
<div class="abs" style="left:636px;top:276px;width:1px;height:539px;background:rgba(0,0,0,0.17)"></div>
<div class="abs" style="left:783px;top:276px;width:147px;height:539px;background:#fff8e6"></div>
<div class="abs" style="left:783px;top:276px;width:1px;height:539px;background:rgba(0,0,0,0.17)"></div>
<div class="abs" style="left:930px;top:276px;width:147px;height:539px;background:#e8f3fb"></div>
<div class="abs" style="left:930px;top:276px;width:1px;height:539px;background:rgba(0,0,0,0.17)"></div>
<div class="abs" style="left:1077px;top:276px;width:147px;height:539px;background:#e9f3e9"></div>
<div class="abs" style="left:1077px;top:276px;width:1px;height:539px;background:rgba(0,0,0,0.17)"></div>
<div class="abs" style="left:151px;top:276px;width:45px;height:1px;background:#e6e6e6"></div>
<div class="abs" style="left:151px;top:284px;width:45px;height:1px;background:#ececec"></div>
<div class="abs" style="left:196px;top:284px;width:1028px;height:1px;background:rgba(0,0,0,0.085)"></div>
<div class="abs" style="left:196px;top:311px;width:1028px;height:1px;background:rgba(0,0,0,0.085)"></div>
<div class="t" style="left:162.65px;top:306.57px;font-size:10.2px;transform:scaleX(0.8737);transform-origin:0 0;color:#555">12:00</div>
<div class="abs" style="left:151px;top:338px;width:45px;height:1px;background:#ececec"></div>
<div class="abs" style="left:196px;top:338px;width:1028px;height:1px;background:rgba(0,0,0,0.085)"></div>
<div class="abs" style="left:196px;top:364px;width:1028px;height:1px;background:rgba(0,0,0,0.085)"></div>
<div class="t" style="left:162.65px;top:359.90px;font-size:10.2px;transform:scaleX(0.8737);transform-origin:0 0;color:#555">13:00</div>
<div class="abs" style="left:151px;top:391px;width:45px;height:1px;background:#ececec"></div>
<div class="abs" style="left:196px;top:391px;width:1028px;height:1px;background:rgba(0,0,0,0.085)"></div>
<div class="abs" style="left:196px;top:418px;width:1028px;height:1px;background:rgba(0,0,0,0.085)"></div>
<div class="t" style="left:162.65px;top:413.23px;font-size:10.2px;transform:scaleX(0.8737);transform-origin:0 0;color:#555">14:00</div>
<div class="abs" style="left:151px;top:444px;width:45px;height:1px;background:#ececec"></div>
<div class="abs" style="left:196px;top:444px;width:1028px;height:1px;background:rgba(0,0,0,0.085)"></div>
<div class="abs" style="left:196px;top:471px;width:1028px;height:1px;background:rgba(0,0,0,0.085)"></div>
<div class="t" style="left:162.65px;top:466.56px;font-size:10.2px;transform:scaleX(0.8737);transform-origin:0 0;color:#555">15:00</div>
<div class="abs" style="left:151px;top:498px;width:45px;height:1px;background:#ececec"></div>
<div class="abs" style="left:196px;top:498px;width:1028px;height:1px;background:rgba(0,0,0,0.085)"></div>
<div class="abs" style="left:196px;top:524px;width:1028px;height:1px;background:rgba(0,0,0,0.085)"></div>
<div class="t" style="left:162.65px;top:519.89px;font-size:10.2px;transform:scaleX(0.8737);transform-origin:0 0;color:#555">16:00</div>
<div class="abs" style="left:151px;top:551px;width:45px;height:1px;background:#ececec"></div>
<div class="abs" style="left:196px;top:551px;width:1028px;height:1px;background:rgba(0,0,0,0.085)"></div>
<div class="abs" style="left:196px;top:578px;width:1028px;height:1px;background:rgba(0,0,0,0.085)"></div>
<div class="t" style="left:162.65px;top:573.22px;font-size:10.2px;transform:scaleX(0.8737);transform-origin:0 0;color:#555">17:00</div>
<div class="abs" style="left:151px;top:604px;width:45px;height:1px;background:#ececec"></div>
<div class="abs" style="left:196px;top:604px;width:1028px;height:1px;background:rgba(0,0,0,0.085)"></div>
<div class="abs" style="left:196px;top:631px;width:1028px;height:1px;background:rgba(0,0,0,0.085)"></div>
<div class="t" style="left:162.65px;top:626.55px;font-size:10.2px;transform:scaleX(0.8737);transform-origin:0 0;color:#555">18:00</div>
<div class="abs" style="left:151px;top:658px;width:45px;height:1px;background:#ececec"></div>
<div class="abs" style="left:196px;top:658px;width:1028px;height:1px;background:rgba(0,0,0,0.085)"></div>
<div class="abs" style="left:196px;top:684px;width:1028px;height:1px;background:rgba(0,0,0,0.085)"></div>
<div class="t" style="left:162.65px;top:679.88px;font-size:10.2px;transform:scaleX(0.8737);transform-origin:0 0;color:#555">19:00</div>
<div class="abs" style="left:151px;top:711px;width:45px;height:1px;background:#ececec"></div>
<div class="abs" style="left:196px;top:711px;width:1028px;height:1px;background:rgba(0,0,0,0.085)"></div>
<div class="abs" style="left:196px;top:738px;width:1028px;height:1px;background:rgba(0,0,0,0.085)"></div>
<div class="t" style="left:161.3px;top:733.21px;font-size:10.2px;transform:scaleX(0.9795);transform-origin:0 0;color:#555">20:00</div>
<div class="abs" style="left:151px;top:764px;width:45px;height:1px;background:#ececec"></div>
<div class="abs" style="left:196px;top:764px;width:1028px;height:1px;background:rgba(0,0,0,0.085)"></div>
<div class="abs" style="left:196px;top:791px;width:1028px;height:1px;background:rgba(0,0,0,0.085)"></div>
<div class="t" style="left:162.3px;top:786.54px;font-size:10.2px;transform:scaleX(0.9012);transform-origin:0 0;color:#555">21:00</div>
<div class="abs" style="left:151px;top:818px;width:45px;height:1px;background:#ececec"></div>
<div class="abs" style="left:196px;top:818px;width:1028px;height:1px;background:rgba(0,0,0,0.085)"></div>
<div class="abs" style="left:151px;top:815px;width:1087px;height:25px;background:#e8e8e8"></div>
<div class="abs" style="left:151px;top:815px;width:1074px;height:1px;background:#f2f2f2"></div>
<div class="abs" style="left:155px;top:823px;width:12px;height:12px;background:#4aaee0;border:1px solid #3a9ed0"></div>
<div class="t" style="left:169.4px;top:823.10px;font-size:10.4px;transform:scaleX(1.0096);transform-origin:0 0;color:#444">1. Awizo czekamy na transport</div>
<div class="abs" style="left:321px;top:823px;width:12px;height:12px;background:#52a862;border:1px solid #3f9550"></div>
<div class="t" style="left:335.6px;top:823.10px;font-size:10.4px;transform:scaleX(1.0149);transform-origin:0 0;color:#444">2. Brama oczekuje na wjazd</div>
<div class="abs" style="left:477px;top:823px;width:12px;height:12px;background:#a2c52c;border:1px solid #8fb21c"></div>
<div class="t" style="left:491.5px;top:823.10px;font-size:10.4px;transform:scaleX(1.0194);transform-origin:0 0;color:#444">3. Magazyn rampy</div>
<div class="abs" style="left:588px;top:823px;width:12px;height:12px;background:#fd8b3e;border:1px solid #e8782c"></div>
<div class="t" style="left:603px;top:823.10px;font-size:10.4px;transform:scaleX(1.0438);transform-origin:0 0;color:#444">4. Magazyn rampa wolna / wyjazd</div>
<div class="abs" style="left:776px;top:823px;width:12px;height:12px;background:#fbb430;border:1px solid #e6a020"></div>
<div class="t" style="left:789.6px;top:823.10px;font-size:10.4px;transform:scaleX(0.9888);transform-origin:0 0;color:#444">5. Parking</div>
<div class="abs" style="left:844.6px;top:823px;width:12px;height:12px;background:#4aaee0;border:1px solid #3a9ed0"></div>
<div class="t" style="left:859px;top:823.10px;font-size:10.4px;transform:scaleX(1.0378);transform-origin:0 0;color:#444">6. Agencja Celna</div>
<div class="abs" style="left:949.3px;top:823px;width:12px;height:12px;background:#52a862;border:1px solid #3f9550"></div>
<div class="t" style="left:963.7px;top:823.10px;font-size:10.4px;transform:scaleX(1.0380);transform-origin:0 0;color:#444">9. Awizacja zamknięta</div>
<div class="abs" style="left:344px;top:339.43px;width:144.5px;height:49.5px;background:#58ab69;border:1px solid #5f7f96;border-radius:2.5px;overflow:hidden">
<div class="t" style="left:34.5px;top:12.27px;font-size:10.2px;color:#fff;-webkit-text-stroke:0.3px #fff;transform:scaleX(0.9425);transform-origin:0 0">A:1305008 LP:6C4CB</div>
<div class="t" style="left:34.5px;top:24.17px;font-size:10.2px;color:#fff;-webkit-text-stroke:0.3px #fff">Auto: WAW0577</div>
<div class="t" style="left:3.3px;top:35.77px;font-size:10.2px;color:#fff;-webkit-text-stroke:0.3px #fff;transform:scaleX(1.0016);transform-origin:0 0">Tel.:+48533322626</div>
</div>
<svg style="left:352px;top:344.43px;" width="24" height="22" viewBox="0 0 24 22"><defs><linearGradient id="tg353_345" x1="0" y1="0" x2="0.3" y2="1"><stop offset="0" stop-color="#e8e8ec"/><stop offset="1" stop-color="#9c9ca6"/></linearGradient></defs><path d="M5 4.6 L15.6 0 L23.2 0.9 L12.3 6.5 Z" fill="#f3f3f6"/><path d="M12.3 6.5 L23.2 0.9 L23.2 9.5 L12.5 14.9 Z" fill="url(#tg353_345)"/><path d="M12.5 15 L23.2 9.6 L23.2 11.6 L12.5 17.2 Z" fill="#3a3a40" opacity="0.75"/><path d="M12.5 13.6 L23.2 8.2 L23.2 9.8 L12.5 15.2 Z" fill="#e42a2a"/><path d="M0.9 7.4 L5 4.6 L12.3 6.5 L11.4 10 L0.2 9.6 Z" fill="#f25a5a"/><path d="M0.2 9.6 L11.4 10 L12.3 6.5 L12.5 17.5 L11.4 20.3 L0.8 19.8 Q0 19.4 0 18.3 Z" fill="#e42a2a"/><path d="M11.4 10 L12.3 6.5 L12.5 17.5 L11.4 20.3 Z" fill="#9e1010"/><path d="M0.2 11.2 L10.8 11.6 L10.8 14.6 L0.2 14.2 Z" fill="#161a28"/><path d="M1.6 15.4 L6.5 15.6 L6.5 17.2 L1.6 17 Z" fill="#d9dce2" opacity="0.8"/><circle cx="8.5" cy="18" r="0.8" fill="#c9ced8" opacity="0.8"/><ellipse cx="12" cy="18.6" rx="1.5" ry="1.8" fill="#2a2a2a"/><ellipse cx="12" cy="18.6" rx="0.75" ry="0.9" fill="#bdbdbd"/><ellipse cx="18.8" cy="14.8" rx="1.3" ry="1.5" fill="#2a2a2a"/><ellipse cx="18.8" cy="14.8" rx="0.6" ry="0.8" fill="#bdbdbd"/><ellipse cx="21.6" cy="13.3" rx="1.2" ry="1.4" fill="#2a2a2a"/><ellipse cx="21.6" cy="13.3" rx="0.55" ry="0.75" fill="#bdbdbd"/></svg>
<div class="abs" style="left:198px;top:392.76px;width:46px;height:49.5px;background:#4caee0;border:1px solid #1b98d6;border-radius:2.5px;overflow:hidden">
<div class="t" style="left:3.3px;top:31.77px;font-size:10.2px;color:#fff;-webkit-text-stroke:0.3px #fff;transform:scaleX(0.8818);transform-origin:0 0">A:1405...</div>
<div class="t" style="left:3.3px;top:43.97px;font-size:10.2px;color:#fff;-webkit-text-stroke:0.3px #fff">LP:21F27</div>
</div>
<svg style="left:206px;top:397.76px;" width="24" height="22" viewBox="0 0 24 22"><defs><linearGradient id="tg207_398" x1="0" y1="0" x2="0.3" y2="1"><stop offset="0" stop-color="#e8e8ec"/><stop offset="1" stop-color="#9c9ca6"/></linearGradient></defs><path d="M5 4.6 L15.6 0 L23.2 0.9 L12.3 6.5 Z" fill="#f3f3f6"/><path d="M12.3 6.5 L23.2 0.9 L23.2 9.5 L12.5 14.9 Z" fill="url(#tg207_398)"/><path d="M12.5 15 L23.2 9.6 L23.2 11.6 L12.5 17.2 Z" fill="#3a3a40" opacity="0.75"/><path d="M12.5 13.6 L23.2 8.2 L23.2 9.8 L12.5 15.2 Z" fill="#4ad630"/><path d="M0.9 7.4 L5 4.6 L12.3 6.5 L11.4 10 L0.2 9.6 Z" fill="#7fe860"/><path d="M0.2 9.6 L11.4 10 L12.3 6.5 L12.5 17.5 L11.4 20.3 L0.8 19.8 Q0 19.4 0 18.3 Z" fill="#4ad630"/><path d="M11.4 10 L12.3 6.5 L12.5 17.5 L11.4 20.3 Z" fill="#2a9a1a"/><path d="M0.2 11.2 L10.8 11.6 L10.8 14.6 L0.2 14.2 Z" fill="#161a28"/><path d="M1.6 15.4 L6.5 15.6 L6.5 17.2 L1.6 17 Z" fill="#d9dce2" opacity="0.8"/><circle cx="8.5" cy="18" r="0.8" fill="#c9ced8" opacity="0.8"/><ellipse cx="12" cy="18.6" rx="1.5" ry="1.8" fill="#2a2a2a"/><ellipse cx="12" cy="18.6" rx="0.75" ry="0.9" fill="#bdbdbd"/><ellipse cx="18.8" cy="14.8" rx="1.3" ry="1.5" fill="#2a2a2a"/><ellipse cx="18.8" cy="14.8" rx="0.6" ry="0.8" fill="#bdbdbd"/><ellipse cx="21.6" cy="13.3" rx="1.2" ry="1.4" fill="#2a2a2a"/><ellipse cx="21.6" cy="13.3" rx="0.55" ry="0.75" fill="#bdbdbd"/></svg>
<div class="abs" style="left:247px;top:392.76px;width:46px;height:49.5px;background:#4caee0;border:1px solid #1b98d6;border-radius:2.5px;overflow:hidden">
<div class="t" style="left:3.3px;top:31.77px;font-size:10.2px;color:#fff;-webkit-text-stroke:0.3px #fff;transform:scaleX(0.8818);transform-origin:0 0">A:1405...</div>
<div class="t" style="left:3.3px;top:43.97px;font-size:10.2px;color:#fff;-webkit-text-stroke:0.3px #fff">LP:BA7..</div>
</div>
<svg style="left:255px;top:397.76px;" width="24" height="22" viewBox="0 0 24 22"><defs><linearGradient id="tg256_398" x1="0" y1="0" x2="0.3" y2="1"><stop offset="0" stop-color="#e8e8ec"/><stop offset="1" stop-color="#9c9ca6"/></linearGradient></defs><path d="M5 4.6 L15.6 0 L23.2 0.9 L12.3 6.5 Z" fill="#f3f3f6"/><path d="M12.3 6.5 L23.2 0.9 L23.2 9.5 L12.5 14.9 Z" fill="url(#tg256_398)"/><path d="M12.5 15 L23.2 9.6 L23.2 11.6 L12.5 17.2 Z" fill="#3a3a40" opacity="0.75"/><path d="M12.5 13.6 L23.2 8.2 L23.2 9.8 L12.5 15.2 Z" fill="#e42a2a"/><path d="M0.9 7.4 L5 4.6 L12.3 6.5 L11.4 10 L0.2 9.6 Z" fill="#f25a5a"/><path d="M0.2 9.6 L11.4 10 L12.3 6.5 L12.5 17.5 L11.4 20.3 L0.8 19.8 Q0 19.4 0 18.3 Z" fill="#e42a2a"/><path d="M11.4 10 L12.3 6.5 L12.5 17.5 L11.4 20.3 Z" fill="#9e1010"/><path d="M0.2 11.2 L10.8 11.6 L10.8 14.6 L0.2 14.2 Z" fill="#161a28"/><path d="M1.6 15.4 L6.5 15.6 L6.5 17.2 L1.6 17 Z" fill="#d9dce2" opacity="0.8"/><circle cx="8.5" cy="18" r="0.8" fill="#c9ced8" opacity="0.8"/><ellipse cx="12" cy="18.6" rx="1.5" ry="1.8" fill="#2a2a2a"/><ellipse cx="12" cy="18.6" rx="0.75" ry="0.9" fill="#bdbdbd"/><ellipse cx="18.8" cy="14.8" rx="1.3" ry="1.5" fill="#2a2a2a"/><ellipse cx="18.8" cy="14.8" rx="0.6" ry="0.8" fill="#bdbdbd"/><ellipse cx="21.6" cy="13.3" rx="1.2" ry="1.4" fill="#2a2a2a"/><ellipse cx="21.6" cy="13.3" rx="0.55" ry="0.75" fill="#bdbdbd"/></svg>
<div class="abs" style="left:296px;top:392.76px;width:46px;height:49.5px;background:#4caee0;border:1px solid #1b98d6;border-radius:2.5px;overflow:hidden">
<div class="t" style="left:3.3px;top:31.77px;font-size:10.2px;color:#fff;-webkit-text-stroke:0.3px #fff;transform:scaleX(0.8818);transform-origin:0 0">A:1405...</div>
<div class="t" style="left:3.3px;top:43.97px;font-size:10.2px;color:#fff;-webkit-text-stroke:0.3px #fff">LP:0471F</div>
</div>
<svg style="left:304px;top:397.76px;" width="24" height="22" viewBox="0 0 24 22"><defs><linearGradient id="tg305_398" x1="0" y1="0" x2="0.3" y2="1"><stop offset="0" stop-color="#e8e8ec"/><stop offset="1" stop-color="#9c9ca6"/></linearGradient></defs><path d="M5 4.6 L15.6 0 L23.2 0.9 L12.3 6.5 Z" fill="#f3f3f6"/><path d="M12.3 6.5 L23.2 0.9 L23.2 9.5 L12.5 14.9 Z" fill="url(#tg305_398)"/><path d="M12.5 15 L23.2 9.6 L23.2 11.6 L12.5 17.2 Z" fill="#3a3a40" opacity="0.75"/><path d="M12.5 13.6 L23.2 8.2 L23.2 9.8 L12.5 15.2 Z" fill="#4ad630"/><path d="M0.9 7.4 L5 4.6 L12.3 6.5 L11.4 10 L0.2 9.6 Z" fill="#7fe860"/><path d="M0.2 9.6 L11.4 10 L12.3 6.5 L12.5 17.5 L11.4 20.3 L0.8 19.8 Q0 19.4 0 18.3 Z" fill="#4ad630"/><path d="M11.4 10 L12.3 6.5 L12.5 17.5 L11.4 20.3 Z" fill="#2a9a1a"/><path d="M0.2 11.2 L10.8 11.6 L10.8 14.6 L0.2 14.2 Z" fill="#161a28"/><path d="M1.6 15.4 L6.5 15.6 L6.5 17.2 L1.6 17 Z" fill="#d9dce2" opacity="0.8"/><circle cx="8.5" cy="18" r="0.8" fill="#c9ced8" opacity="0.8"/><ellipse cx="12" cy="18.6" rx="1.5" ry="1.8" fill="#2a2a2a"/><ellipse cx="12" cy="18.6" rx="0.75" ry="0.9" fill="#bdbdbd"/><ellipse cx="18.8" cy="14.8" rx="1.3" ry="1.5" fill="#2a2a2a"/><ellipse cx="18.8" cy="14.8" rx="0.6" ry="0.8" fill="#bdbdbd"/><ellipse cx="21.6" cy="13.3" rx="1.2" ry="1.4" fill="#2a2a2a"/><ellipse cx="21.6" cy="13.3" rx="0.55" ry="0.75" fill="#bdbdbd"/></svg>
<div class="abs" style="left:198px;top:446.09px;width:70.5px;height:49.5px;background:#4caee0;border:1px solid #1b98d6;border-radius:2.5px;overflow:hidden">
<div class="t" style="left:3.3px;top:31.77px;font-size:10.2px;color:#fff;-webkit-text-stroke:0.3px #fff;transform:scaleX(0.8917);transform-origin:0 0">A:1505018</div>
<div class="t" style="left:3.3px;top:43.97px;font-size:10.2px;color:#fff;-webkit-text-stroke:0.3px #fff">LP:FBF06</div>
</div>
<svg style="left:206px;top:451.09000000000003px;" width="24" height="22" viewBox="0 0 24 22"><defs><linearGradient id="tg207_452" x1="0" y1="0" x2="0.3" y2="1"><stop offset="0" stop-color="#e8e8ec"/><stop offset="1" stop-color="#9c9ca6"/></linearGradient></defs><path d="M5 4.6 L15.6 0 L23.2 0.9 L12.3 6.5 Z" fill="#f3f3f6"/><path d="M12.3 6.5 L23.2 0.9 L23.2 9.5 L12.5 14.9 Z" fill="url(#tg207_452)"/><path d="M12.5 15 L23.2 9.6 L23.2 11.6 L12.5 17.2 Z" fill="#3a3a40" opacity="0.75"/><path d="M12.5 13.6 L23.2 8.2 L23.2 9.8 L12.5 15.2 Z" fill="#e42a2a"/><path d="M0.9 7.4 L5 4.6 L12.3 6.5 L11.4 10 L0.2 9.6 Z" fill="#f25a5a"/><path d="M0.2 9.6 L11.4 10 L12.3 6.5 L12.5 17.5 L11.4 20.3 L0.8 19.8 Q0 19.4 0 18.3 Z" fill="#e42a2a"/><path d="M11.4 10 L12.3 6.5 L12.5 17.5 L11.4 20.3 Z" fill="#9e1010"/><path d="M0.2 11.2 L10.8 11.6 L10.8 14.6 L0.2 14.2 Z" fill="#161a28"/><path d="M1.6 15.4 L6.5 15.6 L6.5 17.2 L1.6 17 Z" fill="#d9dce2" opacity="0.8"/><circle cx="8.5" cy="18" r="0.8" fill="#c9ced8" opacity="0.8"/><ellipse cx="12" cy="18.6" rx="1.5" ry="1.8" fill="#2a2a2a"/><ellipse cx="12" cy="18.6" rx="0.75" ry="0.9" fill="#bdbdbd"/><ellipse cx="18.8" cy="14.8" rx="1.3" ry="1.5" fill="#2a2a2a"/><ellipse cx="18.8" cy="14.8" rx="0.6" ry="0.8" fill="#bdbdbd"/><ellipse cx="21.6" cy="13.3" rx="1.2" ry="1.4" fill="#2a2a2a"/><ellipse cx="21.6" cy="13.3" rx="0.55" ry="0.75" fill="#bdbdbd"/></svg>
<div class="abs" style="left:271px;top:446.09px;width:71px;height:49.5px;background:#4caee0;border:1px solid #1b98d6;border-radius:2.5px;overflow:hidden">
<div class="t" style="left:3.3px;top:31.77px;font-size:10.2px;color:#fff;-webkit-text-stroke:0.3px #fff;transform:scaleX(0.8917);transform-origin:0 0">A:1505016</div>
<div class="t" style="left:3.3px;top:43.97px;font-size:10.2px;color:#fff;-webkit-text-stroke:0.3px #fff">LP:88A4D</div>
</div>
<svg style="left:279px;top:451.09000000000003px;" width="24" height="22" viewBox="0 0 24 22"><defs><linearGradient id="tg280_452" x1="0" y1="0" x2="0.3" y2="1"><stop offset="0" stop-color="#e8e8ec"/><stop offset="1" stop-color="#9c9ca6"/></linearGradient></defs><path d="M5 4.6 L15.6 0 L23.2 0.9 L12.3 6.5 Z" fill="#f3f3f6"/><path d="M12.3 6.5 L23.2 0.9 L23.2 9.5 L12.5 14.9 Z" fill="url(#tg280_452)"/><path d="M12.5 15 L23.2 9.6 L23.2 11.6 L12.5 17.2 Z" fill="#3a3a40" opacity="0.75"/><path d="M12.5 13.6 L23.2 8.2 L23.2 9.8 L12.5 15.2 Z" fill="#e42a2a"/><path d="M0.9 7.4 L5 4.6 L12.3 6.5 L11.4 10 L0.2 9.6 Z" fill="#f25a5a"/><path d="M0.2 9.6 L11.4 10 L12.3 6.5 L12.5 17.5 L11.4 20.3 L0.8 19.8 Q0 19.4 0 18.3 Z" fill="#e42a2a"/><path d="M11.4 10 L12.3 6.5 L12.5 17.5 L11.4 20.3 Z" fill="#9e1010"/><path d="M0.2 11.2 L10.8 11.6 L10.8 14.6 L0.2 14.2 Z" fill="#161a28"/><path d="M1.6 15.4 L6.5 15.6 L6.5 17.2 L1.6 17 Z" fill="#d9dce2" opacity="0.8"/><circle cx="8.5" cy="18" r="0.8" fill="#c9ced8" opacity="0.8"/><ellipse cx="12" cy="18.6" rx="1.5" ry="1.8" fill="#2a2a2a"/><ellipse cx="12" cy="18.6" rx="0.75" ry="0.9" fill="#bdbdbd"/><ellipse cx="18.8" cy="14.8" rx="1.3" ry="1.5" fill="#2a2a2a"/><ellipse cx="18.8" cy="14.8" rx="0.6" ry="0.8" fill="#bdbdbd"/><ellipse cx="21.6" cy="13.3" rx="1.2" ry="1.4" fill="#2a2a2a"/><ellipse cx="21.6" cy="13.3" rx="0.55" ry="0.75" fill="#bdbdbd"/></svg>
<div class="abs" style="left:198px;top:499.42px;width:70.5px;height:49.5px;background:#4caee0;border:1px solid #1b98d6;border-radius:2.5px;overflow:hidden">
<div class="t" style="left:3.3px;top:31.77px;font-size:10.2px;color:#fff;-webkit-text-stroke:0.3px #fff;transform:scaleX(0.8917);transform-origin:0 0">A:1605024</div>
<div class="t" style="left:3.3px;top:43.97px;font-size:10.2px;color:#fff;-webkit-text-stroke:0.3px #fff">LP:C1G10</div>
</div>
<svg style="left:206px;top:504.42px;" width="24" height="22" viewBox="0 0 24 22"><defs><linearGradient id="tg207_505" x1="0" y1="0" x2="0.3" y2="1"><stop offset="0" stop-color="#e8e8ec"/><stop offset="1" stop-color="#9c9ca6"/></linearGradient></defs><path d="M5 4.6 L15.6 0 L23.2 0.9 L12.3 6.5 Z" fill="#f3f3f6"/><path d="M12.3 6.5 L23.2 0.9 L23.2 9.5 L12.5 14.9 Z" fill="url(#tg207_505)"/><path d="M12.5 15 L23.2 9.6 L23.2 11.6 L12.5 17.2 Z" fill="#3a3a40" opacity="0.75"/><path d="M12.5 13.6 L23.2 8.2 L23.2 9.8 L12.5 15.2 Z" fill="#4ad630"/><path d="M0.9 7.4 L5 4.6 L12.3 6.5 L11.4 10 L0.2 9.6 Z" fill="#7fe860"/><path d="M0.2 9.6 L11.4 10 L12.3 6.5 L12.5 17.5 L11.4 20.3 L0.8 19.8 Q0 19.4 0 18.3 Z" fill="#4ad630"/><path d="M11.4 10 L12.3 6.5 L12.5 17.5 L11.4 20.3 Z" fill="#2a9a1a"/><path d="M0.2 11.2 L10.8 11.6 L10.8 14.6 L0.2 14.2 Z" fill="#161a28"/><path d="M1.6 15.4 L6.5 15.6 L6.5 17.2 L1.6 17 Z" fill="#d9dce2" opacity="0.8"/><circle cx="8.5" cy="18" r="0.8" fill="#c9ced8" opacity="0.8"/><ellipse cx="12" cy="18.6" rx="1.5" ry="1.8" fill="#2a2a2a"/><ellipse cx="12" cy="18.6" rx="0.75" ry="0.9" fill="#bdbdbd"/><ellipse cx="18.8" cy="14.8" rx="1.3" ry="1.5" fill="#2a2a2a"/><ellipse cx="18.8" cy="14.8" rx="0.6" ry="0.8" fill="#bdbdbd"/><ellipse cx="21.6" cy="13.3" rx="1.2" ry="1.4" fill="#2a2a2a"/><ellipse cx="21.6" cy="13.3" rx="0.55" ry="0.75" fill="#bdbdbd"/></svg>
<div class="abs" style="left:271px;top:499.42px;width:71px;height:49.5px;background:#4caee0;border:1px solid #1b98d6;border-radius:2.5px;overflow:hidden">
<div class="t" style="left:3.3px;top:31.77px;font-size:10.2px;color:#fff;-webkit-text-stroke:0.3px #fff;transform:scaleX(0.8917);transform-origin:0 0">A:1605016</div>
<div class="t" style="left:3.3px;top:43.97px;font-size:10.2px;color:#fff;-webkit-text-stroke:0.3px #fff">LP:B7E2A</div>
</div>
<svg style="left:279px;top:504.42px;" width="24" height="22" viewBox="0 0 24 22"><defs><linearGradient id="tg280_505" x1="0" y1="0" x2="0.3" y2="1"><stop offset="0" stop-color="#e8e8ec"/><stop offset="1" stop-color="#9c9ca6"/></linearGradient></defs><path d="M5 4.6 L15.6 0 L23.2 0.9 L12.3 6.5 Z" fill="#f3f3f6"/><path d="M12.3 6.5 L23.2 0.9 L23.2 9.5 L12.5 14.9 Z" fill="url(#tg280_505)"/><path d="M12.5 15 L23.2 9.6 L23.2 11.6 L12.5 17.2 Z" fill="#3a3a40" opacity="0.75"/><path d="M12.5 13.6 L23.2 8.2 L23.2 9.8 L12.5 15.2 Z" fill="#e42a2a"/><path d="M0.9 7.4 L5 4.6 L12.3 6.5 L11.4 10 L0.2 9.6 Z" fill="#f25a5a"/><path d="M0.2 9.6 L11.4 10 L12.3 6.5 L12.5 17.5 L11.4 20.3 L0.8 19.8 Q0 19.4 0 18.3 Z" fill="#e42a2a"/><path d="M11.4 10 L12.3 6.5 L12.5 17.5 L11.4 20.3 Z" fill="#9e1010"/><path d="M0.2 11.2 L10.8 11.6 L10.8 14.6 L0.2 14.2 Z" fill="#161a28"/><path d="M1.6 15.4 L6.5 15.6 L6.5 17.2 L1.6 17 Z" fill="#d9dce2" opacity="0.8"/><circle cx="8.5" cy="18" r="0.8" fill="#c9ced8" opacity="0.8"/><ellipse cx="12" cy="18.6" rx="1.5" ry="1.8" fill="#2a2a2a"/><ellipse cx="12" cy="18.6" rx="0.75" ry="0.9" fill="#bdbdbd"/><ellipse cx="18.8" cy="14.8" rx="1.3" ry="1.5" fill="#2a2a2a"/><ellipse cx="18.8" cy="14.8" rx="0.6" ry="0.8" fill="#bdbdbd"/><ellipse cx="21.6" cy="13.3" rx="1.2" ry="1.4" fill="#2a2a2a"/><ellipse cx="21.6" cy="13.3" rx="0.55" ry="0.75" fill="#bdbdbd"/></svg>
<div class="abs" style="left:198px;top:552.75px;width:46px;height:49.5px;background:#4caee0;border:1px solid #1b98d6;border-radius:2.5px;overflow:hidden">
<div class="t" style="left:3.3px;top:31.77px;font-size:10.2px;color:#fff;-webkit-text-stroke:0.3px #fff;transform:scaleX(0.8818);transform-origin:0 0">A:1705...</div>
<div class="t" style="left:3.3px;top:43.97px;font-size:10.2px;color:#fff;-webkit-text-stroke:0.3px #fff">LP:FF4F7</div>
</div>
<svg style="left:206px;top:557.75px;" width="24" height="22" viewBox="0 0 24 22"><defs><linearGradient id="tg207_558" x1="0" y1="0" x2="0.3" y2="1"><stop offset="0" stop-color="#e8e8ec"/><stop offset="1" stop-color="#9c9ca6"/></linearGradient></defs><path d="M5 4.6 L15.6 0 L23.2 0.9 L12.3 6.5 Z" fill="#f3f3f6"/><path d="M12.3 6.5 L23.2 0.9 L23.2 9.5 L12.5 14.9 Z" fill="url(#tg207_558)"/><path d="M12.5 15 L23.2 9.6 L23.2 11.6 L12.5 17.2 Z" fill="#3a3a40" opacity="0.75"/><path d="M12.5 13.6 L23.2 8.2 L23.2 9.8 L12.5 15.2 Z" fill="#e42a2a"/><path d="M0.9 7.4 L5 4.6 L12.3 6.5 L11.4 10 L0.2 9.6 Z" fill="#f25a5a"/><path d="M0.2 9.6 L11.4 10 L12.3 6.5 L12.5 17.5 L11.4 20.3 L0.8 19.8 Q0 19.4 0 18.3 Z" fill="#e42a2a"/><path d="M11.4 10 L12.3 6.5 L12.5 17.5 L11.4 20.3 Z" fill="#9e1010"/><path d="M0.2 11.2 L10.8 11.6 L10.8 14.6 L0.2 14.2 Z" fill="#161a28"/><path d="M1.6 15.4 L6.5 15.6 L6.5 17.2 L1.6 17 Z" fill="#d9dce2" opacity="0.8"/><circle cx="8.5" cy="18" r="0.8" fill="#c9ced8" opacity="0.8"/><ellipse cx="12" cy="18.6" rx="1.5" ry="1.8" fill="#2a2a2a"/><ellipse cx="12" cy="18.6" rx="0.75" ry="0.9" fill="#bdbdbd"/><ellipse cx="18.8" cy="14.8" rx="1.3" ry="1.5" fill="#2a2a2a"/><ellipse cx="18.8" cy="14.8" rx="0.6" ry="0.8" fill="#bdbdbd"/><ellipse cx="21.6" cy="13.3" rx="1.2" ry="1.4" fill="#2a2a2a"/><ellipse cx="21.6" cy="13.3" rx="0.55" ry="0.75" fill="#bdbdbd"/></svg>
<div class="abs" style="left:247px;top:552.75px;width:46px;height:49.5px;background:#4caee0;border:1px solid #1b98d6;border-radius:2.5px;overflow:hidden">
<div class="t" style="left:3.3px;top:31.77px;font-size:10.2px;color:#fff;-webkit-text-stroke:0.3px #fff;transform:scaleX(0.8818);transform-origin:0 0">A:1705...</div>
<div class="t" style="left:3.3px;top:43.97px;font-size:10.2px;color:#fff;-webkit-text-stroke:0.3px #fff">LP:8F77I</div>
</div>
<svg style="left:255px;top:557.75px;" width="24" height="22" viewBox="0 0 24 22"><defs><linearGradient id="tg256_558" x1="0" y1="0" x2="0.3" y2="1"><stop offset="0" stop-color="#e8e8ec"/><stop offset="1" stop-color="#9c9ca6"/></linearGradient></defs><path d="M5 4.6 L15.6 0 L23.2 0.9 L12.3 6.5 Z" fill="#f3f3f6"/><path d="M12.3 6.5 L23.2 0.9 L23.2 9.5 L12.5 14.9 Z" fill="url(#tg256_558)"/><path d="M12.5 15 L23.2 9.6 L23.2 11.6 L12.5 17.2 Z" fill="#3a3a40" opacity="0.75"/><path d="M12.5 13.6 L23.2 8.2 L23.2 9.8 L12.5 15.2 Z" fill="#e42a2a"/><path d="M0.9 7.4 L5 4.6 L12.3 6.5 L11.4 10 L0.2 9.6 Z" fill="#f25a5a"/><path d="M0.2 9.6 L11.4 10 L12.3 6.5 L12.5 17.5 L11.4 20.3 L0.8 19.8 Q0 19.4 0 18.3 Z" fill="#e42a2a"/><path d="M11.4 10 L12.3 6.5 L12.5 17.5 L11.4 20.3 Z" fill="#9e1010"/><path d="M0.2 11.2 L10.8 11.6 L10.8 14.6 L0.2 14.2 Z" fill="#161a28"/><path d="M1.6 15.4 L6.5 15.6 L6.5 17.2 L1.6 17 Z" fill="#d9dce2" opacity="0.8"/><circle cx="8.5" cy="18" r="0.8" fill="#c9ced8" opacity="0.8"/><ellipse cx="12" cy="18.6" rx="1.5" ry="1.8" fill="#2a2a2a"/><ellipse cx="12" cy="18.6" rx="0.75" ry="0.9" fill="#bdbdbd"/><ellipse cx="18.8" cy="14.8" rx="1.3" ry="1.5" fill="#2a2a2a"/><ellipse cx="18.8" cy="14.8" rx="0.6" ry="0.8" fill="#bdbdbd"/><ellipse cx="21.6" cy="13.3" rx="1.2" ry="1.4" fill="#2a2a2a"/><ellipse cx="21.6" cy="13.3" rx="0.55" ry="0.75" fill="#bdbdbd"/></svg>
<div class="abs" style="left:296px;top:552.75px;width:46px;height:49.5px;background:#4caee0;border:1px solid #1b98d6;border-radius:2.5px;overflow:hidden">
<div class="t" style="left:3.3px;top:31.77px;font-size:10.2px;color:#fff;-webkit-text-stroke:0.3px #fff;transform:scaleX(0.8818);transform-origin:0 0">A:1705...</div>
<div class="t" style="left:3.3px;top:43.97px;font-size:10.2px;color:#fff;-webkit-text-stroke:0.3px #fff">LP:717..</div>
</div>
<svg style="left:304px;top:557.75px;" width="24" height="22" viewBox="0 0 24 22"><defs><linearGradient id="tg305_558" x1="0" y1="0" x2="0.3" y2="1"><stop offset="0" stop-color="#e8e8ec"/><stop offset="1" stop-color="#9c9ca6"/></linearGradient></defs><path d="M5 4.6 L15.6 0 L23.2 0.9 L12.3 6.5 Z" fill="#f3f3f6"/><path d="M12.3 6.5 L23.2 0.9 L23.2 9.5 L12.5 14.9 Z" fill="url(#tg305_558)"/><path d="M12.5 15 L23.2 9.6 L23.2 11.6 L12.5 17.2 Z" fill="#3a3a40" opacity="0.75"/><path d="M12.5 13.6 L23.2 8.2 L23.2 9.8 L12.5 15.2 Z" fill="#4ad630"/><path d="M0.9 7.4 L5 4.6 L12.3 6.5 L11.4 10 L0.2 9.6 Z" fill="#7fe860"/><path d="M0.2 9.6 L11.4 10 L12.3 6.5 L12.5 17.5 L11.4 20.3 L0.8 19.8 Q0 19.4 0 18.3 Z" fill="#4ad630"/><path d="M11.4 10 L12.3 6.5 L12.5 17.5 L11.4 20.3 Z" fill="#2a9a1a"/><path d="M0.2 11.2 L10.8 11.6 L10.8 14.6 L0.2 14.2 Z" fill="#161a28"/><path d="M1.6 15.4 L6.5 15.6 L6.5 17.2 L1.6 17 Z" fill="#d9dce2" opacity="0.8"/><circle cx="8.5" cy="18" r="0.8" fill="#c9ced8" opacity="0.8"/><ellipse cx="12" cy="18.6" rx="1.5" ry="1.8" fill="#2a2a2a"/><ellipse cx="12" cy="18.6" rx="0.75" ry="0.9" fill="#bdbdbd"/><ellipse cx="18.8" cy="14.8" rx="1.3" ry="1.5" fill="#2a2a2a"/><ellipse cx="18.8" cy="14.8" rx="0.6" ry="0.8" fill="#bdbdbd"/><ellipse cx="21.6" cy="13.3" rx="1.2" ry="1.4" fill="#2a2a2a"/><ellipse cx="21.6" cy="13.3" rx="0.55" ry="0.75" fill="#bdbdbd"/></svg>
<div class="abs" style="left:198px;top:606.08px;width:46px;height:49.5px;background:#4caee0;border:1px solid #1b98d6;border-radius:2.5px;overflow:hidden">
<div class="t" style="left:3.3px;top:31.77px;font-size:10.2px;color:#fff;-webkit-text-stroke:0.3px #fff;transform:scaleX(0.8818);transform-origin:0 0">A:1805...</div>
<div class="t" style="left:3.3px;top:43.97px;font-size:10.2px;color:#fff;-webkit-text-stroke:0.3px #fff">LP:0DD..</div>
</div>
<svg style="left:206px;top:611.08px;" width="24" height="22" viewBox="0 0 24 22"><defs><linearGradient id="tg207_612" x1="0" y1="0" x2="0.3" y2="1"><stop offset="0" stop-color="#e8e8ec"/><stop offset="1" stop-color="#9c9ca6"/></linearGradient></defs><path d="M5 4.6 L15.6 0 L23.2 0.9 L12.3 6.5 Z" fill="#f3f3f6"/><path d="M12.3 6.5 L23.2 0.9 L23.2 9.5 L12.5 14.9 Z" fill="url(#tg207_612)"/><path d="M12.5 15 L23.2 9.6 L23.2 11.6 L12.5 17.2 Z" fill="#3a3a40" opacity="0.75"/><path d="M12.5 13.6 L23.2 8.2 L23.2 9.8 L12.5 15.2 Z" fill="#e42a2a"/><path d="M0.9 7.4 L5 4.6 L12.3 6.5 L11.4 10 L0.2 9.6 Z" fill="#f25a5a"/><path d="M0.2 9.6 L11.4 10 L12.3 6.5 L12.5 17.5 L11.4 20.3 L0.8 19.8 Q0 19.4 0 18.3 Z" fill="#e42a2a"/><path d="M11.4 10 L12.3 6.5 L12.5 17.5 L11.4 20.3 Z" fill="#9e1010"/><path d="M0.2 11.2 L10.8 11.6 L10.8 14.6 L0.2 14.2 Z" fill="#161a28"/><path d="M1.6 15.4 L6.5 15.6 L6.5 17.2 L1.6 17 Z" fill="#d9dce2" opacity="0.8"/><circle cx="8.5" cy="18" r="0.8" fill="#c9ced8" opacity="0.8"/><ellipse cx="12" cy="18.6" rx="1.5" ry="1.8" fill="#2a2a2a"/><ellipse cx="12" cy="18.6" rx="0.75" ry="0.9" fill="#bdbdbd"/><ellipse cx="18.8" cy="14.8" rx="1.3" ry="1.5" fill="#2a2a2a"/><ellipse cx="18.8" cy="14.8" rx="0.6" ry="0.8" fill="#bdbdbd"/><ellipse cx="21.6" cy="13.3" rx="1.2" ry="1.4" fill="#2a2a2a"/><ellipse cx="21.6" cy="13.3" rx="0.55" ry="0.75" fill="#bdbdbd"/></svg>
<div class="abs" style="left:247px;top:606.08px;width:46px;height:49.5px;background:#4caee0;border:1px solid #1b98d6;border-radius:2.5px;overflow:hidden">
<div class="t" style="left:3.3px;top:31.77px;font-size:10.2px;color:#fff;-webkit-text-stroke:0.3px #fff;transform:scaleX(0.8818);transform-origin:0 0">A:1805...</div>
<div class="t" style="left:3.3px;top:43.97px;font-size:10.2px;color:#fff;-webkit-text-stroke:0.3px #fff">LP:0AE..</div>
</div>
<svg style="left:255px;top:611.08px;" width="24" height="22" viewBox="0 0 24 22"><defs><linearGradient id="tg256_612" x1="0" y1="0" x2="0.3" y2="1"><stop offset="0" stop-color="#e8e8ec"/><stop offset="1" stop-color="#9c9ca6"/></linearGradient></defs><path d="M5 4.6 L15.6 0 L23.2 0.9 L12.3 6.5 Z" fill="#f3f3f6"/><path d="M12.3 6.5 L23.2 0.9 L23.2 9.5 L12.5 14.9 Z" fill="url(#tg256_612)"/><path d="M12.5 15 L23.2 9.6 L23.2 11.6 L12.5 17.2 Z" fill="#3a3a40" opacity="0.75"/><path d="M12.5 13.6 L23.2 8.2 L23.2 9.8 L12.5 15.2 Z" fill="#e42a2a"/><path d="M0.9 7.4 L5 4.6 L12.3 6.5 L11.4 10 L0.2 9.6 Z" fill="#f25a5a"/><path d="M0.2 9.6 L11.4 10 L12.3 6.5 L12.5 17.5 L11.4 20.3 L0.8 19.8 Q0 19.4 0 18.3 Z" fill="#e42a2a"/><path d="M11.4 10 L12.3 6.5 L12.5 17.5 L11.4 20.3 Z" fill="#9e1010"/><path d="M0.2 11.2 L10.8 11.6 L10.8 14.6 L0.2 14.2 Z" fill="#161a28"/><path d="M1.6 15.4 L6.5 15.6 L6.5 17.2 L1.6 17 Z" fill="#d9dce2" opacity="0.8"/><circle cx="8.5" cy="18" r="0.8" fill="#c9ced8" opacity="0.8"/><ellipse cx="12" cy="18.6" rx="1.5" ry="1.8" fill="#2a2a2a"/><ellipse cx="12" cy="18.6" rx="0.75" ry="0.9" fill="#bdbdbd"/><ellipse cx="18.8" cy="14.8" rx="1.3" ry="1.5" fill="#2a2a2a"/><ellipse cx="18.8" cy="14.8" rx="0.6" ry="0.8" fill="#bdbdbd"/><ellipse cx="21.6" cy="13.3" rx="1.2" ry="1.4" fill="#2a2a2a"/><ellipse cx="21.6" cy="13.3" rx="0.55" ry="0.75" fill="#bdbdbd"/></svg>
<div class="abs" style="left:296px;top:606.08px;width:46px;height:49.5px;background:#4caee0;border:1px solid #1b98d6;border-radius:2.5px;overflow:hidden">
<div class="t" style="left:3.3px;top:31.77px;font-size:10.2px;color:#fff;-webkit-text-stroke:0.3px #fff;transform:scaleX(0.8818);transform-origin:0 0">A:1805...</div>
<div class="t" style="left:3.3px;top:43.97px;font-size:10.2px;color:#fff;-webkit-text-stroke:0.3px #fff">LP:5?4..</div>
</div>
<svg style="left:304px;top:611.08px;" width="24" height="22" viewBox="0 0 24 22"><defs><linearGradient id="tg305_612" x1="0" y1="0" x2="0.3" y2="1"><stop offset="0" stop-color="#e8e8ec"/><stop offset="1" stop-color="#9c9ca6"/></linearGradient></defs><path d="M5 4.6 L15.6 0 L23.2 0.9 L12.3 6.5 Z" fill="#f3f3f6"/><path d="M12.3 6.5 L23.2 0.9 L23.2 9.5 L12.5 14.9 Z" fill="url(#tg305_612)"/><path d="M12.5 15 L23.2 9.6 L23.2 11.6 L12.5 17.2 Z" fill="#3a3a40" opacity="0.75"/><path d="M12.5 13.6 L23.2 8.2 L23.2 9.8 L12.5 15.2 Z" fill="#e42a2a"/><path d="M0.9 7.4 L5 4.6 L12.3 6.5 L11.4 10 L0.2 9.6 Z" fill="#f25a5a"/><path d="M0.2 9.6 L11.4 10 L12.3 6.5 L12.5 17.5 L11.4 20.3 L0.8 19.8 Q0 19.4 0 18.3 Z" fill="#e42a2a"/><path d="M11.4 10 L12.3 6.5 L12.5 17.5 L11.4 20.3 Z" fill="#9e1010"/><path d="M0.2 11.2 L10.8 11.6 L10.8 14.6 L0.2 14.2 Z" fill="#161a28"/><path d="M1.6 15.4 L6.5 15.6 L6.5 17.2 L1.6 17 Z" fill="#d9dce2" opacity="0.8"/><circle cx="8.5" cy="18" r="0.8" fill="#c9ced8" opacity="0.8"/><ellipse cx="12" cy="18.6" rx="1.5" ry="1.8" fill="#2a2a2a"/><ellipse cx="12" cy="18.6" rx="0.75" ry="0.9" fill="#bdbdbd"/><ellipse cx="18.8" cy="14.8" rx="1.3" ry="1.5" fill="#2a2a2a"/><ellipse cx="18.8" cy="14.8" rx="0.6" ry="0.8" fill="#bdbdbd"/><ellipse cx="21.6" cy="13.3" rx="1.2" ry="1.4" fill="#2a2a2a"/><ellipse cx="21.6" cy="13.3" rx="0.55" ry="0.75" fill="#bdbdbd"/></svg>
<div class="abs" style="left:198px;top:659.41px;width:144px;height:49.5px;background:#4caee0;border:1px solid #1b98d6;border-radius:2.5px;overflow:hidden">
<div class="t" style="left:34.5px;top:12.27px;font-size:10.2px;color:#fff;-webkit-text-stroke:0.3px #fff;transform:scaleX(0.9494);transform-origin:0 0">A:1905015 LP:98308</div>
<div class="t" style="left:34.5px;top:24.17px;font-size:10.2px;color:#fff;-webkit-text-stroke:0.3px #fff">Auto: WAW0750</div>
<div class="t" style="left:3.3px;top:35.77px;font-size:10.2px;color:#fff;-webkit-text-stroke:0.3px #fff;transform:scaleX(1.0016);transform-origin:0 0">Tel.:+48533322626</div>
</div>
<svg style="left:206px;top:664.41px;" width="24" height="22" viewBox="0 0 24 22"><defs><linearGradient id="tg207_665" x1="0" y1="0" x2="0.3" y2="1"><stop offset="0" stop-color="#e8e8ec"/><stop offset="1" stop-color="#9c9ca6"/></linearGradient></defs><path d="M5 4.6 L15.6 0 L23.2 0.9 L12.3 6.5 Z" fill="#f3f3f6"/><path d="M12.3 6.5 L23.2 0.9 L23.2 9.5 L12.5 14.9 Z" fill="url(#tg207_665)"/><path d="M12.5 15 L23.2 9.6 L23.2 11.6 L12.5 17.2 Z" fill="#3a3a40" opacity="0.75"/><path d="M12.5 13.6 L23.2 8.2 L23.2 9.8 L12.5 15.2 Z" fill="#4ad630"/><path d="M0.9 7.4 L5 4.6 L12.3 6.5 L11.4 10 L0.2 9.6 Z" fill="#7fe860"/><path d="M0.2 9.6 L11.4 10 L12.3 6.5 L12.5 17.5 L11.4 20.3 L0.8 19.8 Q0 19.4 0 18.3 Z" fill="#4ad630"/><path d="M11.4 10 L12.3 6.5 L12.5 17.5 L11.4 20.3 Z" fill="#2a9a1a"/><path d="M0.2 11.2 L10.8 11.6 L10.8 14.6 L0.2 14.2 Z" fill="#161a28"/><path d="M1.6 15.4 L6.5 15.6 L6.5 17.2 L1.6 17 Z" fill="#d9dce2" opacity="0.8"/><circle cx="8.5" cy="18" r="0.8" fill="#c9ced8" opacity="0.8"/><ellipse cx="12" cy="18.6" rx="1.5" ry="1.8" fill="#2a2a2a"/><ellipse cx="12" cy="18.6" rx="0.75" ry="0.9" fill="#bdbdbd"/><ellipse cx="18.8" cy="14.8" rx="1.3" ry="1.5" fill="#2a2a2a"/><ellipse cx="18.8" cy="14.8" rx="0.6" ry="0.8" fill="#bdbdbd"/><ellipse cx="21.6" cy="13.3" rx="1.2" ry="1.4" fill="#2a2a2a"/><ellipse cx="21.6" cy="13.3" rx="0.55" ry="0.75" fill="#bdbdbd"/></svg>
<div class="abs" style="left:198px;top:712.74px;width:70.5px;height:49.5px;background:#4caee0;border:1px solid #1b98d6;border-radius:2.5px;overflow:hidden">
<div class="t" style="left:3.3px;top:31.77px;font-size:10.2px;color:#fff;-webkit-text-stroke:0.3px #fff;transform:scaleX(0.8917);transform-origin:0 0">A:2005022</div>
<div class="t" style="left:3.3px;top:43.97px;font-size:10.2px;color:#fff;-webkit-text-stroke:0.3px #fff">LP:B3352</div>
</div>
<svg style="left:206px;top:717.74px;" width="24" height="22" viewBox="0 0 24 22"><defs><linearGradient id="tg207_718" x1="0" y1="0" x2="0.3" y2="1"><stop offset="0" stop-color="#e8e8ec"/><stop offset="1" stop-color="#9c9ca6"/></linearGradient></defs><path d="M5 4.6 L15.6 0 L23.2 0.9 L12.3 6.5 Z" fill="#f3f3f6"/><path d="M12.3 6.5 L23.2 0.9 L23.2 9.5 L12.5 14.9 Z" fill="url(#tg207_718)"/><path d="M12.5 15 L23.2 9.6 L23.2 11.6 L12.5 17.2 Z" fill="#3a3a40" opacity="0.75"/><path d="M12.5 13.6 L23.2 8.2 L23.2 9.8 L12.5 15.2 Z" fill="#4ad630"/><path d="M0.9 7.4 L5 4.6 L12.3 6.5 L11.4 10 L0.2 9.6 Z" fill="#7fe860"/><path d="M0.2 9.6 L11.4 10 L12.3 6.5 L12.5 17.5 L11.4 20.3 L0.8 19.8 Q0 19.4 0 18.3 Z" fill="#4ad630"/><path d="M11.4 10 L12.3 6.5 L12.5 17.5 L11.4 20.3 Z" fill="#2a9a1a"/><path d="M0.2 11.2 L10.8 11.6 L10.8 14.6 L0.2 14.2 Z" fill="#161a28"/><path d="M1.6 15.4 L6.5 15.6 L6.5 17.2 L1.6 17 Z" fill="#d9dce2" opacity="0.8"/><circle cx="8.5" cy="18" r="0.8" fill="#c9ced8" opacity="0.8"/><ellipse cx="12" cy="18.6" rx="1.5" ry="1.8" fill="#2a2a2a"/><ellipse cx="12" cy="18.6" rx="0.75" ry="0.9" fill="#bdbdbd"/><ellipse cx="18.8" cy="14.8" rx="1.3" ry="1.5" fill="#2a2a2a"/><ellipse cx="18.8" cy="14.8" rx="0.6" ry="0.8" fill="#bdbdbd"/><ellipse cx="21.6" cy="13.3" rx="1.2" ry="1.4" fill="#2a2a2a"/><ellipse cx="21.6" cy="13.3" rx="0.55" ry="0.75" fill="#bdbdbd"/></svg>
<div class="abs" style="left:271px;top:712.74px;width:71px;height:49.5px;background:#4caee0;border:1px solid #1b98d6;border-radius:2.5px;overflow:hidden">
<div class="t" style="left:3.3px;top:31.77px;font-size:10.2px;color:#fff;-webkit-text-stroke:0.3px #fff;transform:scaleX(0.8917);transform-origin:0 0">A:2005012</div>
<div class="t" style="left:3.3px;top:43.97px;font-size:10.2px;color:#fff;-webkit-text-stroke:0.3px #fff">LP:B2000</div>
</div>
<svg style="left:279px;top:717.74px;" width="24" height="22" viewBox="0 0 24 22"><defs><linearGradient id="tg280_718" x1="0" y1="0" x2="0.3" y2="1"><stop offset="0" stop-color="#e8e8ec"/><stop offset="1" stop-color="#9c9ca6"/></linearGradient></defs><path d="M5 4.6 L15.6 0 L23.2 0.9 L12.3 6.5 Z" fill="#f3f3f6"/><path d="M12.3 6.5 L23.2 0.9 L23.2 9.5 L12.5 14.9 Z" fill="url(#tg280_718)"/><path d="M12.5 15 L23.2 9.6 L23.2 11.6 L12.5 17.2 Z" fill="#3a3a40" opacity="0.75"/><path d="M12.5 13.6 L23.2 8.2 L23.2 9.8 L12.5 15.2 Z" fill="#e42a2a"/><path d="M0.9 7.4 L5 4.6 L12.3 6.5 L11.4 10 L0.2 9.6 Z" fill="#f25a5a"/><path d="M0.2 9.6 L11.4 10 L12.3 6.5 L12.5 17.5 L11.4 20.3 L0.8 19.8 Q0 19.4 0 18.3 Z" fill="#e42a2a"/><path d="M11.4 10 L12.3 6.5 L12.5 17.5 L11.4 20.3 Z" fill="#9e1010"/><path d="M0.2 11.2 L10.8 11.6 L10.8 14.6 L0.2 14.2 Z" fill="#161a28"/><path d="M1.6 15.4 L6.5 15.6 L6.5 17.2 L1.6 17 Z" fill="#d9dce2" opacity="0.8"/><circle cx="8.5" cy="18" r="0.8" fill="#c9ced8" opacity="0.8"/><ellipse cx="12" cy="18.6" rx="1.5" ry="1.8" fill="#2a2a2a"/><ellipse cx="12" cy="18.6" rx="0.75" ry="0.9" fill="#bdbdbd"/><ellipse cx="18.8" cy="14.8" rx="1.3" ry="1.5" fill="#2a2a2a"/><ellipse cx="18.8" cy="14.8" rx="0.6" ry="0.8" fill="#bdbdbd"/><ellipse cx="21.6" cy="13.3" rx="1.2" ry="1.4" fill="#2a2a2a"/><ellipse cx="21.6" cy="13.3" rx="0.55" ry="0.75" fill="#bdbdbd"/></svg>
<div class="abs" style="left:196px;top:348px;width:1031px;height:2px;background-image:repeating-linear-gradient(90deg,#f01010 0 2px,transparent 2px 3.72px)"></div>
<div class="abs" style="left:472.5px;top:379.2px;width:149px;height:143.5px;background:#efefef;border:1px solid #d2d2d2;border-radius:3px;box-shadow:1px 1px 2px rgba(0,0,0,0.12)"></div>
<div class="t" style="left:499px;top:386.03px;font-size:10.6px;transform:scaleX(0.9160);transform-origin:0 0;color:#333;-webkit-text-stroke:0.1px #333">Wyślij SMS</div>
<div class="t" style="left:499px;top:405.90px;font-size:10.6px;transform:scaleX(1.0357);transform-origin:0 0;color:#333;-webkit-text-stroke:0.1px #333">Wyślij e-mail</div>
<div class="t" style="left:499px;top:425.77px;font-size:10.6px;transform:scaleX(1.0429);transform-origin:0 0;color:#333;-webkit-text-stroke:0.1px #333">Uwagi / notatki</div>
<div class="t" style="left:499px;top:445.64px;font-size:10.6px;transform:scaleX(0.9884);transform-origin:0 0;color:#333;-webkit-text-stroke:0.1px #333">Dyskusja</div>
<div class="t" style="left:499px;top:465.51px;font-size:10.6px;transform:scaleX(0.9868);transform-origin:0 0;color:#333;-webkit-text-stroke:0.1px #333">Załączniki</div>
<div class="t" style="left:499px;top:485.38px;font-size:10.6px;transform:scaleX(0.9261);transform-origin:0 0;color:#333;-webkit-text-stroke:0.1px #333">Pliki</div>
<div class="t" style="left:499px;top:505.25px;font-size:10.6px;transform:scaleX(0.9804);transform-origin:0 0;color:#333;-webkit-text-stroke:0.1px #333">Zdjęcia</div>
<svg style="left:484px;top:385px;" width="12" height="12" viewBox="0 0 12 12"><rect x="0.7" y="1.5" width="9.6" height="8.3" rx="0.8" fill="#fff" stroke="#3d5a70" stroke-width="1.2"/><g fill="#3d5a70"><circle cx="2.5" cy="1.2" r="0.7"/><circle cx="4.5" cy="1.2" r="0.7"/><circle cx="6.5" cy="1.2" r="0.7"/><circle cx="8.5" cy="1.2" r="0.7"/></g><g fill="#4a90d0"><rect x="2.2" y="5" width="1" height="1"/><rect x="4" y="4.5" width="2" height="2"/><rect x="7" y="4.5" width="1.8" height="2"/></g></svg>
<svg style="left:484px;top:405px;" width="12" height="12" viewBox="0 0 12 12"><rect x="0.7" y="1" width="9.6" height="7.5" rx="0.8" fill="#fff" stroke="#3d5a70" stroke-width="1.2"/><path d="M0.7 1.5 L5.5 5.5 L10.3 1.5 M0.7 8 L4 5 M10.3 8 L7 5" fill="none" stroke="#3d5a70" stroke-width="0.9"/></svg>
<svg style="left:484px;top:425px;" width="12" height="12" viewBox="0 0 12 12"><rect x="1" y="0.5" width="8" height="10.5" fill="#fff" stroke="#3d5a70" stroke-width="1"/><g fill="#4a90d0"><rect x="2.5" y="2.3" width="2" height="1.5"/><rect x="5" y="2.6" width="2.5" height="0.8"/><rect x="2.5" y="4.8" width="5" height="0.8"/><rect x="2.5" y="6.6" width="5" height="0.8"/><rect x="2.5" y="8.4" width="5" height="0.8"/></g></svg>
<svg style="left:484px;top:445px;" width="12" height="12" viewBox="0 0 12 12"><ellipse cx="5.5" cy="4.5" rx="4.9" ry="3.8" fill="#fff" stroke="#3d5a70" stroke-width="1.1"/><path d="M2 7.5 L1 10 L4.5 8.2" fill="#fff" stroke="#3d5a70" stroke-width="1"/><g fill="#4a90d0"><circle cx="3.5" cy="4.5" r="0.7"/><circle cx="5.5" cy="4.5" r="0.7"/><circle cx="7.5" cy="4.5" r="0.7"/></g></svg>
<svg style="left:484px;top:465px;" width="12" height="12" viewBox="0 0 12 12"><path d="M1.5 0.7 H9.5 V8 L6.5 11 H1.5 Z" fill="#fff" stroke="#3d5a70" stroke-width="1.1"/><path d="M6.5 11 V8 H9.5" fill="none" stroke="#3d5a70" stroke-width="0.9"/><g fill="#4a90d0"><rect x="3" y="2.5" width="5" height="1"/><rect x="3" y="4.3" width="5" height="1"/></g></svg>
<svg style="left:484px;top:485px;" width="12" height="12" viewBox="0 0 12 12"><path d="M0.8 10.5 V3 H5 M0.8 10.5 H3 M7.5 10.5 H10" fill="none" stroke="#4a90d0" stroke-width="1.2"/><path d="M4 8 L8.5 2 Q10 0.5 10.5 2.2 L6 9 Q4.5 10 4 8 Z" fill="none" stroke="#3d5a70" stroke-width="1.1"/></svg>
<svg style="left:484px;top:505px;" width="12" height="12" viewBox="0 0 12 12"><rect x="0.7" y="1" width="10" height="8" rx="0.5" fill="#fff" stroke="#3d5a70" stroke-width="1.2"/><path d="M0 10.3 H11.5" stroke="#3d5a70" stroke-width="1"/><path d="M3 6.5 L4.5 4 L5.5 5.5 L7 3.5 L8.5 6.5" fill="none" stroke="#4a90d0" stroke-width="0.8"/></svg>
<svg style="left:472px;top:379px;" width="10" height="15" viewBox="0 0 10 15"><path d="M0.5 0.5 L0.5 12.5 L3.3 9.8 L5.2 14 L7 13.2 L5.1 9.1 L8.8 9.1 Z" fill="#fff" stroke="#222" stroke-width="0.9" stroke-linejoin="round"/></svg>
</div>
</body></html>
